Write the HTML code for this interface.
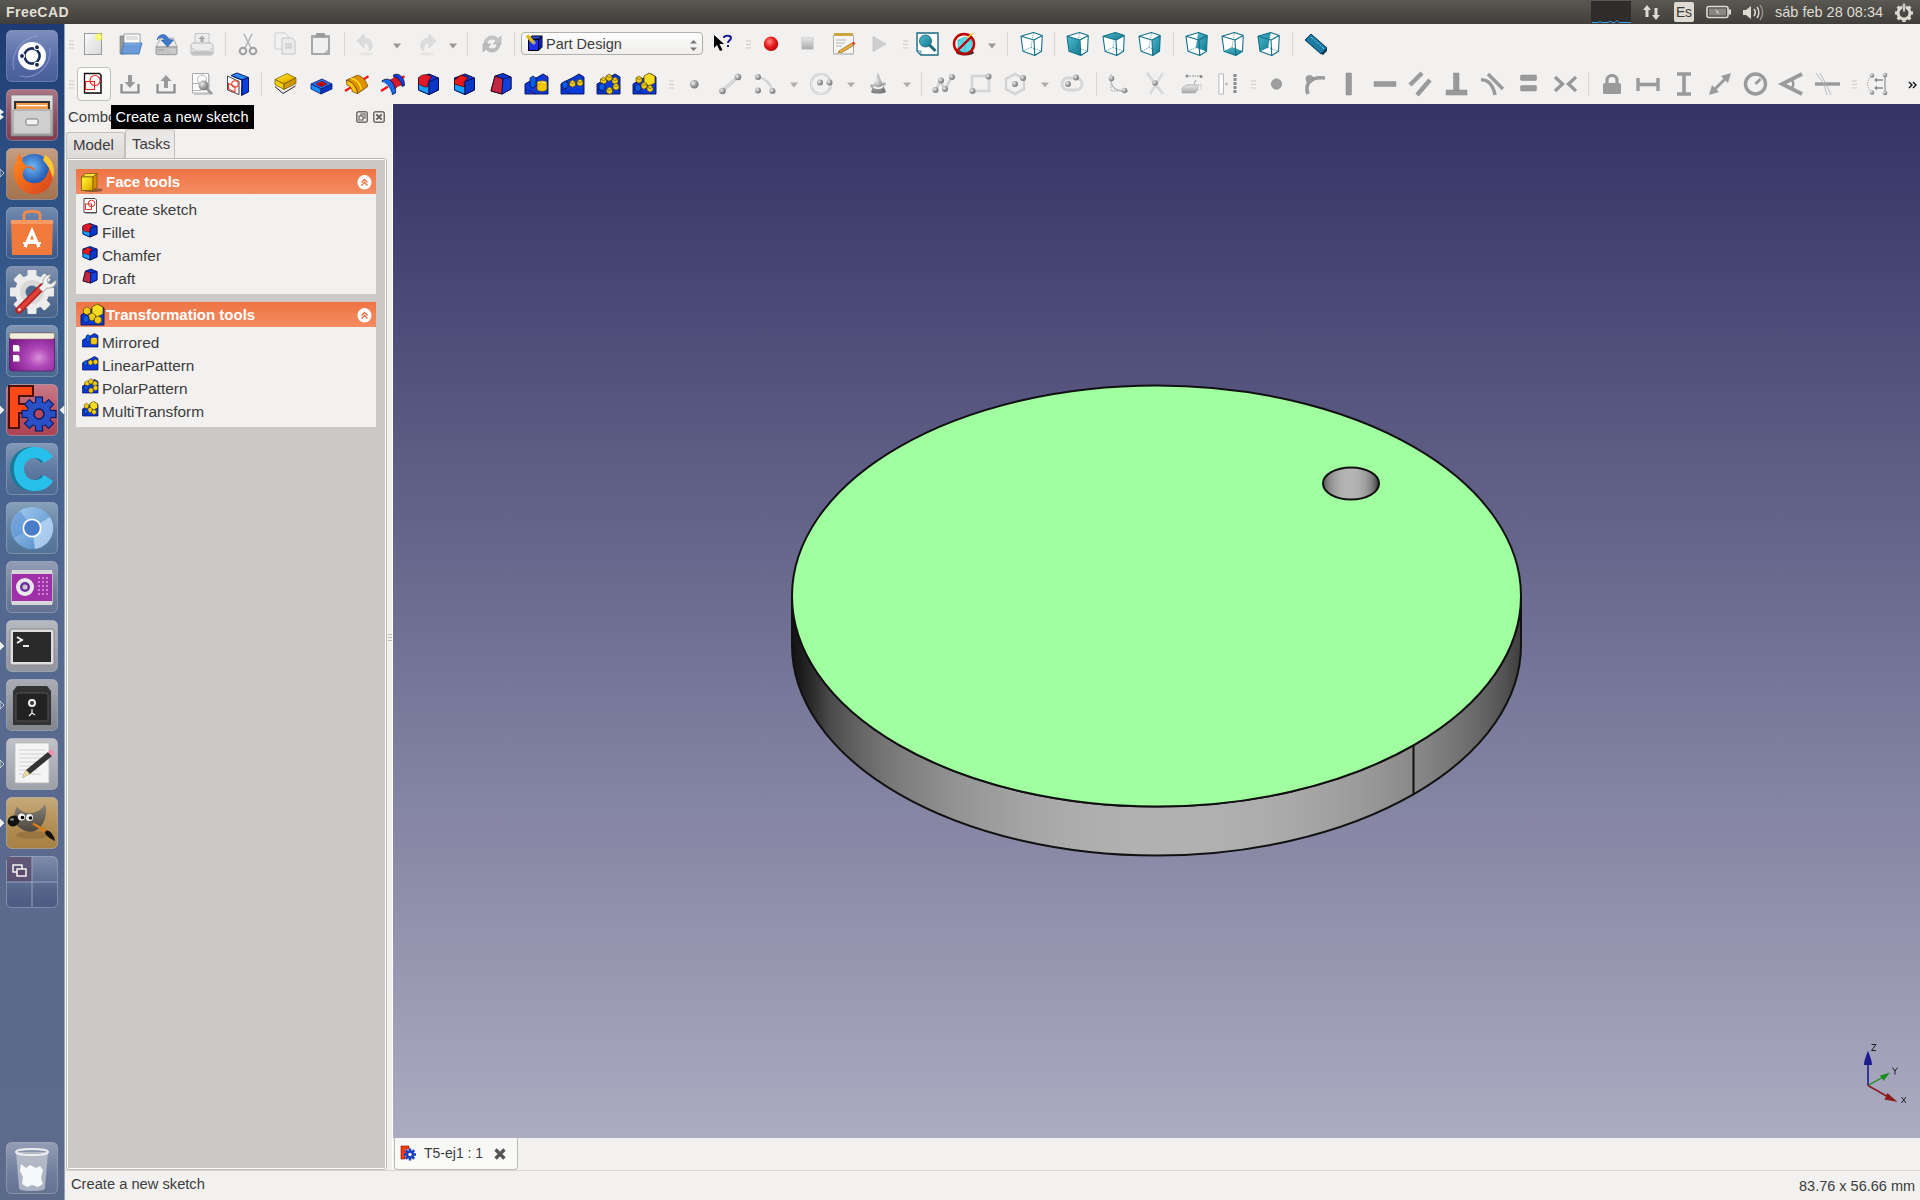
<!DOCTYPE html>
<html><head><meta charset="utf-8">
<style>
*{margin:0;padding:0;box-sizing:border-box}
html,body{width:1920px;height:1200px;overflow:hidden;background:#f2f1f0;font-family:"Liberation Sans",sans-serif;position:relative}
.a{position:absolute}
svg{position:absolute;overflow:visible}
#panel{left:0;top:0;width:1920px;height:24px;background:linear-gradient(#5a5852,#3f3e3a)}
#title{left:6px;top:4px;color:#e3dfd6;font-weight:bold;font-size:14px;line-height:16px;letter-spacing:0.45px}
#launcher{left:0;top:24px;width:65px;height:1176px;background:linear-gradient(#1d3b72 0px,#2a4c80 120px,#3a5d8c 300px,#47638f 450px,#55698f 600px,#5a6a8e 800px,#5d6b8b 1176px)}
#launcher .edge{right:0;top:0;width:1px;height:1176px;background:#9aa3b8}
.tile{left:6px;width:52px;height:52px;border-radius:5px;background:linear-gradient(rgba(255,255,255,.22),rgba(255,255,255,.08));box-shadow:inset 0 0 0 1px rgba(255,255,255,.18)}
#tb{left:65px;top:24px;width:1855px;height:80px;background:#f2f1f0}
#view{left:393px;top:104px;width:1527px;height:1034px;background:linear-gradient(#333365,#ababc1)}
#vline{left:392px;top:104px;width:1px;height:1066px;background:#fff}
#combo{left:65px;top:104px;width:327px;height:1066px;background:#f2f1f0}
#status{left:65px;top:1170px;width:1855px;height:30px;background:#f2f1f0;border-top:1px solid #dad8d3}
.t{position:absolute;color:#3c3c3c;font-size:15px;line-height:17px;white-space:nowrap}
.hd{position:absolute;left:76px;width:300px;height:25px;background:linear-gradient(#ee7443,#f38c62)}
.hd .t{color:#fff;font-weight:bold;font-size:15px}
.items{position:absolute;left:76px;width:300px;background:#f2f1f0}
.chev{position:absolute;left:282px;top:6px;width:13px;height:13px;border-radius:50%;background:#fff}
</style></head><body>

<div id="panel" class="a"><div id="title" class="a">FreeCAD</div></div>
<div id="launcher" class="a"><div class="a edge"></div></div>
<div id="tb" class="a"></div>
<div id="combo" class="a"></div>
<div id="vline" class="a"></div>
<div id="view" class="a"></div>

<svg style="left:0;top:0" width="1920" height="1200" viewBox="0 0 1920 1200">
<defs>
<linearGradient id="sideg" x1="792.0" x2="1521.0" y1="0" y2="0" gradientUnits="userSpaceOnUse"><stop offset="0.000" stop-color="rgb(18,18,18)"/><stop offset="0.025" stop-color="rgb(40,40,40)"/><stop offset="0.050" stop-color="rgb(72,72,72)"/><stop offset="0.075" stop-color="rgb(90,90,90)"/><stop offset="0.100" stop-color="rgb(104,104,104)"/><stop offset="0.125" stop-color="rgb(116,116,116)"/><stop offset="0.150" stop-color="rgb(125,125,125)"/><stop offset="0.175" stop-color="rgb(133,133,133)"/><stop offset="0.200" stop-color="rgb(140,140,140)"/><stop offset="0.225" stop-color="rgb(147,147,147)"/><stop offset="0.250" stop-color="rgb(152,152,152)"/><stop offset="0.275" stop-color="rgb(157,157,157)"/><stop offset="0.300" stop-color="rgb(161,161,161)"/><stop offset="0.325" stop-color="rgb(165,165,165)"/><stop offset="0.350" stop-color="rgb(168,168,168)"/><stop offset="0.375" stop-color="rgb(171,171,171)"/><stop offset="0.400" stop-color="rgb(173,173,173)"/><stop offset="0.425" stop-color="rgb(175,175,175)"/><stop offset="0.450" stop-color="rgb(176,176,176)"/><stop offset="0.475" stop-color="rgb(177,177,177)"/><stop offset="0.500" stop-color="rgb(177,177,177)"/><stop offset="0.525" stop-color="rgb(177,177,177)"/><stop offset="0.550" stop-color="rgb(177,177,177)"/><stop offset="0.575" stop-color="rgb(177,177,177)"/><stop offset="0.600" stop-color="rgb(175,175,175)"/><stop offset="0.625" stop-color="rgb(174,174,174)"/><stop offset="0.650" stop-color="rgb(172,172,172)"/><stop offset="0.675" stop-color="rgb(170,170,170)"/><stop offset="0.700" stop-color="rgb(167,167,167)"/><stop offset="0.725" stop-color="rgb(163,163,163)"/><stop offset="0.750" stop-color="rgb(160,160,160)"/><stop offset="0.775" stop-color="rgb(155,155,155)"/><stop offset="0.800" stop-color="rgb(150,150,150)"/><stop offset="0.825" stop-color="rgb(144,144,144)"/><stop offset="0.850" stop-color="rgb(138,138,138)"/><stop offset="0.875" stop-color="rgb(130,130,130)"/><stop offset="0.900" stop-color="rgb(121,121,121)"/><stop offset="0.925" stop-color="rgb(111,111,111)"/><stop offset="0.950" stop-color="rgb(99,99,99)"/><stop offset="0.975" stop-color="rgb(84,84,84)"/><stop offset="1.000" stop-color="rgb(62,62,62)"/></linearGradient>
<linearGradient id="holeg" x1="1323" x2="1379" y1="0" y2="0" gradientUnits="userSpaceOnUse"><stop offset="0.000" stop-color="rgb(84,84,84)"/><stop offset="0.050" stop-color="rgb(114,114,114)"/><stop offset="0.100" stop-color="rgb(133,133,133)"/><stop offset="0.150" stop-color="rgb(147,147,147)"/><stop offset="0.200" stop-color="rgb(158,158,158)"/><stop offset="0.250" stop-color="rgb(166,166,166)"/><stop offset="0.300" stop-color="rgb(173,173,173)"/><stop offset="0.350" stop-color="rgb(177,177,177)"/><stop offset="0.400" stop-color="rgb(180,180,180)"/><stop offset="0.450" stop-color="rgb(181,181,181)"/><stop offset="0.500" stop-color="rgb(181,181,181)"/><stop offset="0.550" stop-color="rgb(180,180,180)"/><stop offset="0.600" stop-color="rgb(177,177,177)"/><stop offset="0.650" stop-color="rgb(173,173,173)"/><stop offset="0.700" stop-color="rgb(166,166,166)"/><stop offset="0.750" stop-color="rgb(158,158,158)"/><stop offset="0.800" stop-color="rgb(147,147,147)"/><stop offset="0.850" stop-color="rgb(133,133,133)"/><stop offset="0.900" stop-color="rgb(114,114,114)"/><stop offset="0.950" stop-color="rgb(84,84,84)"/><stop offset="1.000" stop-color="rgb(40,40,40)"/></linearGradient>
</defs>
<path d="M792.0,596 L792.0,645 A364.5,210.5 0 0 0 1521.0,645 L1521.0,596 A364.5,210.5 0 0 1 792.0,596 Z" fill="url(#sideg)" stroke="#111" stroke-width="2"/>
<ellipse cx="1156.5" cy="596" rx="364.5" ry="210.5" fill="#a0ff9e" stroke="#111" stroke-width="2"/>
<line x1="1413.5" y1="745.3" x2="1413.5" y2="794.3" stroke="#111" stroke-width="2"/>
<ellipse cx="1351" cy="483.5" rx="28" ry="16" fill="url(#holeg)" stroke="#111" stroke-width="2"/>
</svg>

<svg style="left:1850px;top:1035px" width="70" height="75" viewBox="1850 1035 70 75">
<line x1="1868" y1="1085.5" x2="1868" y2="1058" stroke="#1c1c8c" stroke-width="1.6"/>
<path d="M1868 1050.5 C1869 1054 1872 1060 1872 1065 L1864 1065 C1864 1060 1867 1054 1868 1050.5 Z" fill="#1c1c8c"/>
<line x1="1868" y1="1085.5" x2="1884" y2="1076.5" stroke="#1f8c1f" stroke-width="1.4"/>
<path d="M1890 1072.5 L1880 1075.5 L1883.5 1081 Z" fill="#1f8c1f"/>
<line x1="1868" y1="1085.5" x2="1890" y2="1098" stroke="#8c1c1c" stroke-width="1.5"/>
<path d="M1897.5 1102 L1887.5 1093 L1884.5 1099.5 Z" fill="#8c1c1c"/>
<path d="M1871.5 1044.5h4.5l-4.5 6h4.5" fill="none" stroke="#111" stroke-width="0.9"/>
<path d="M1892.5 1067.5l2.5 3.5l2.5-3.5M1895 1071v3.5" fill="none" stroke="#111" stroke-width="0.9"/>
<path d="M1901.5 1097l4.5 6M1906 1097l-4.5 6" fill="none" stroke="#111" stroke-width="0.9"/>
</svg>
<div id="status" class="a"></div>

<!-- combo view -->
<div class="t" style="left:68px;top:108px">Combo View</div>
<svg style="left:356px;top:111px" width="12" height="12" viewBox="0 0 12 12"><rect x="0.75" y="0.75" width="10.5" height="10.5" rx="2" fill="none" stroke="#6e6d6a" stroke-width="1.5"/><rect x="5" y="3" width="4" height="4" fill="none" stroke="#6e6d6a" stroke-width="1.2"/><rect x="3" y="5" width="4" height="4" fill="#f2f1f0" stroke="#6e6d6a" stroke-width="1.2"/></svg>
<svg style="left:373px;top:111px" width="12" height="12" viewBox="0 0 12 12"><rect x="0.75" y="0.75" width="10.5" height="10.5" rx="2" fill="none" stroke="#6e6d6a" stroke-width="1.5"/><path d="M3.3 3.3L8.7 8.7M8.7 3.3L3.3 8.7" stroke="#5e5d5a" stroke-width="1.9"/></svg>
<!-- tabs -->
<div class="a" style="left:66px;top:132px;width:59px;height:27px;border:1px solid #c4c1bb;border-bottom:none;border-radius:3px 3px 0 0;background:linear-gradient(#e9e8e6,#dcdad7)"></div>
<div class="a" style="left:125px;top:129px;width:50px;height:30px;border:1px solid #c4c1bb;border-bottom:none;border-radius:3px 3px 0 0;background:linear-gradient(#e6e5e3,#f0efed)"></div>
<div class="t" style="left:73px;top:136px">Model</div>
<div class="t" style="left:132px;top:135px">Tasks</div>
<!-- panel box -->
<div class="a" style="left:66px;top:158px;width:321px;height:1012px;border:1px solid #bdbab4;border-radius:3px;background:#fdfdfc"></div>
<div class="a" style="left:68px;top:160px;width:317px;height:1008px;background:#cbc9c6"></div>
<div class="hd" style="top:169px"><div class="t" style="left:30px;top:4px">Face tools</div><div class="chev"></div></div>
<div class="items" style="top:194px;height:100px">
<div class="t" style="left:26px;top:7px;font-size:15.4px">Create sketch</div>
<div class="t" style="left:26px;top:30px;font-size:15.4px">Fillet</div>
<div class="t" style="left:26px;top:53px;font-size:15.4px">Chamfer</div>
<div class="t" style="left:26px;top:76px;font-size:15.4px">Draft</div>
</div>
<div class="hd" style="top:302px"><div class="t" style="left:30px;top:4px">Transformation tools</div><div class="chev"></div></div>
<div class="items" style="top:327px;height:100px">
<div class="t" style="left:26px;top:7px;font-size:15.4px">Mirrored</div>
<div class="t" style="left:26px;top:30px;font-size:15.4px">LinearPattern</div>
<div class="t" style="left:26px;top:53px;font-size:15.4px">PolarPattern</div>
<div class="t" style="left:26px;top:76px;font-size:15.4px">MultiTransform</div>
</div>
<!-- tab bar -->
<div class="a" style="left:394px;top:1138px;width:124px;height:32px;border:1px solid #bdbab4;border-top:none;border-radius:0 0 4px 4px;background:linear-gradient(#f6f6f5,#fbfbfa)"></div>
<div class="t" style="left:424px;top:1145px;font-size:14px">T5-ej1 : 1</div>
<div class="t" style="left:71px;top:1176px;font-size:14.7px">Create a new sketch</div>
<div class="t" style="left:1799px;top:1178px;font-size:14.5px">83.76 x 56.66 mm</div>
<!-- tooltip -->
<div class="a" style="left:111px;top:105px;width:143px;height:24px;background:#000"></div>
<div class="t" style="left:115.5px;top:109px;color:#fff;font-size:14.6px">Create a new sketch</div>
<!--BODY-->

<svg width="0" height="0" style="left:0;top:0"><defs>
<linearGradient id="gpaper" x1="0" y1="0" x2="1" y2="1"><stop offset="0" stop-color="#fafafa"/><stop offset="1" stop-color="#d8d8d8"/></linearGradient>
<linearGradient id="gsilver" x1="0" y1="0" x2="0" y2="1"><stop offset="0" stop-color="#e8e8e8"/><stop offset="1" stop-color="#a8a8a8"/></linearGradient>
<radialGradient id="gred" cx="0.4" cy="0.35" r="0.7"><stop offset="0" stop-color="#ff8a8a"/><stop offset="0.5" stop-color="#e82020"/><stop offset="1" stop-color="#b00000"/></radialGradient>
<radialGradient id="gspark" cx="0.5" cy="0.5" r="0.5"><stop offset="0" stop-color="#fffff0"/><stop offset="0.35" stop-color="#ffff50"/><stop offset="1" stop-color="#ffff00" stop-opacity="0"/></radialGradient>
<radialGradient id="gball" cx="0.35" cy="0.35" r="0.7"><stop offset="0" stop-color="#eee"/><stop offset="0.6" stop-color="#999"/><stop offset="1" stop-color="#777"/></radialGradient>
<linearGradient id="gteal" x1="0" y1="0" x2="1" y2="1"><stop offset="0" stop-color="#4fb8cc"/><stop offset="1" stop-color="#137d94"/></linearGradient>
<linearGradient id="gyel" x1="0" y1="0" x2="1" y2="1"><stop offset="0" stop-color="#fff25a"/><stop offset="0.5" stop-color="#f2c400"/><stop offset="1" stop-color="#c88a00"/></linearGradient>
<linearGradient id="gblue" x1="0" y1="0" x2="1" y2="1"><stop offset="0" stop-color="#3a9cff"/><stop offset="1" stop-color="#0a2fb8"/></linearGradient>
</defs></svg>
<svg style="left:69px;top:40px" width="5" height="9" viewBox="0 0 5 9"><path d="M0 1h5M0 4.5h5M0 8h5" stroke="#c9c7c2" stroke-width="0.9"/></svg>
<svg style="left:746px;top:40px" width="5" height="9" viewBox="0 0 5 9"><path d="M0 1h5M0 4.5h5M0 8h5" stroke="#c9c7c2" stroke-width="0.9"/></svg>
<svg style="left:903px;top:40px" width="5" height="9" viewBox="0 0 5 9"><path d="M0 1h5M0 4.5h5M0 8h5" stroke="#c9c7c2" stroke-width="0.9"/></svg>
<div class="a" style="left:225px;top:32px;width:1px;height:24px;background:#d8d6d2"></div>
<div class="a" style="left:344px;top:32px;width:1px;height:24px;background:#d8d6d2"></div>
<div class="a" style="left:467px;top:32px;width:1px;height:24px;background:#d8d6d2"></div>
<div class="a" style="left:514px;top:32px;width:1px;height:24px;background:#d8d6d2"></div>
<div class="a" style="left:1007px;top:32px;width:1px;height:24px;background:#d8d6d2"></div>
<div class="a" style="left:1054px;top:32px;width:1px;height:24px;background:#d8d6d2"></div>
<div class="a" style="left:1173px;top:32px;width:1px;height:24px;background:#d8d6d2"></div>
<div class="a" style="left:1292px;top:32px;width:1px;height:24px;background:#d8d6d2"></div>
<svg style="left:392.5px;top:42.5px" width="8" height="6" viewBox="0 0 8 6"><path d="M0 0.5h8L4 5.5z" fill="#9a9995"/></svg>
<svg style="left:448.5px;top:42.5px" width="8" height="6" viewBox="0 0 8 6"><path d="M0 0.5h8L4 5.5z" fill="#9a9995"/></svg>
<svg style="left:988px;top:42.5px" width="8" height="6" viewBox="0 0 8 6"><path d="M0 0.5h8L4 5.5z" fill="#9a9995"/></svg>
<svg style="left:82.0px;top:32.0px" width="24" height="24" viewBox="0 0 24 24"><rect x="2.5" y="1.5" width="17" height="21" fill="url(#gpaper)" stroke="#9a9a9a"/><circle cx="17" cy="5" r="4.5" fill="url(#gspark)"/></svg>
<svg style="left:117.5px;top:32.0px" width="24" height="24" viewBox="0 0 24 24"><path d="M2 4h4l1 1v17H2z" fill="#9a9a9a" stroke="#777" stroke-width="0.6"/><path d="M6 2h16v10H6z" fill="#fafafa" stroke="#8c8c8c" stroke-width="0.8"/><path d="M8 5h12M8 7h12" stroke="#c8c8c8" stroke-width="1"/><path d="M6 11h18l-3 11H3z" fill="#6a9ad8" stroke="#3e6fb0" stroke-width="0.8"/><path d="M6.5 12h16" stroke="#a0c4f0" stroke-width="0.8"/></svg>
<svg style="left:153.5px;top:32.0px" width="24" height="24" viewBox="0 0 24 24"><path d="M6.5 6h13l3.5 9H2z" fill="#ececec" stroke="#9a9a9a" stroke-width="0.8"/><path d="M2 15h21v6.5c0 0.8-0.7 1.2-1.2 1.2H3.2c-0.6 0-1.2-0.4-1.2-1.2z" fill="#c4c4c4" stroke="#8a8a8a" stroke-width="0.8"/><path d="M4 18h6" stroke="#999" stroke-width="1"/><path d="M17 17v4M19 17v4M21 17v4" stroke="#d8d8d8" stroke-width="0.8"/><path d="M3 8C4 2 12 0 14.5 7L19.5 8L13.5 15L7 8H10.5C9 4.5 6 4.5 3 8Z" fill="#3f78c8" stroke="#2a5aa0" stroke-width="0.5"/></svg>
<svg style="left:189.5px;top:32.0px" width="24" height="24" viewBox="0 0 24 24"><rect x="5" y="1.5" width="14" height="10" fill="#ececec" stroke="#bbb" stroke-width="0.8"/><path d="M12 3.5l3.5 3.5h-2v3h-3v-3h-2z" fill="#a8a8a8"/><path d="M1 14c0-2 1-3 3-3h16c2 0 3 1 3 3v7c0 1-1 2-2 2H3c-1 0-2-1-2-2z" fill="#ececec" stroke="#a8a8a8" stroke-width="0.8"/><path d="M3 16c0 3 1 3 3 3h12c2 0 3 0 3-3" fill="none" stroke="#b4b4b4" stroke-width="0.8"/><rect x="1.5" y="19.5" width="21" height="3" rx="1.2" fill="#c0c0c0"/></svg>
<svg style="left:236.0px;top:32.0px" width="24" height="24" viewBox="0 0 24 24"><path d="M8 2l7 14M16 2l-7 14" stroke="#b4b4b4" stroke-width="1.6"/><circle cx="7" cy="19" r="3.3" fill="none" stroke="#9e9e9e" stroke-width="2"/><circle cx="17" cy="19" r="3.3" fill="none" stroke="#9e9e9e" stroke-width="2"/></svg>
<svg style="left:273.0px;top:32.0px" width="24" height="24" viewBox="0 0 24 24"><path d="M2 1h10l3 3v13H2z" fill="#f2f2f2" stroke="#c4c4c4" stroke-width="0.8"/><path d="M9 6h10l3 3v13H9z" fill="#ececec" stroke="#bcbcbc" stroke-width="0.8"/><rect x="12" y="11" width="7" height="6" fill="#d6d6d6"/></svg>
<svg style="left:309.0px;top:32.0px" width="24" height="24" viewBox="0 0 24 24"><rect x="2" y="3" width="19" height="20" rx="1" fill="#a8a8a8"/><rect x="4" y="6" width="15" height="15" fill="#f0f0f0"/><rect x="7" y="1" width="9" height="4" rx="1" fill="#9a9a9a"/><path d="M15 21l4-4v4z" fill="#bbb"/></svg>
<svg style="left:355.5px;top:32.0px" width="24" height="24" viewBox="0 0 24 24"><path d="M1 9l7-7v4c6 0 9 4 8 10l-3 3c1-5-1-8-5-8v5z" fill="#dcdcdc" stroke="#cfcfcf" stroke-width="0.6"/><ellipse cx="10" cy="22" rx="7" ry="1.5" fill="#e4e3e1"/></svg>
<svg style="left:412.5px;top:32.0px" width="24" height="24" viewBox="0 0 24 24"><path d="M23 9l-7-7v4c-6 0-9 4-8 10l3 3c-1-5 1-8 5-8v5z" fill="#dcdcdc" stroke="#cfcfcf" stroke-width="0.6"/><ellipse cx="14" cy="22" rx="7" ry="1.5" fill="#e4e3e1"/></svg>
<svg style="left:479.5px;top:32.0px" width="24" height="24" viewBox="0 0 24 24"><path d="M4 12c0-5 4-8 8-8c3 0 5 1 6 3l3-3v8h-8l3-3c-1-1-2-2-4-2c-3 0-5 2-5 5z" fill="#c4c4c4" stroke="#b0b0b0" stroke-width="0.6"/><path d="M20 12c0 5-4 8-8 8c-3 0-5-1-6-3l-3 3v-8h8l-3 3c1 1 2 2 4 2c3 0 5-2 5-5z" fill="#bdbdbd" stroke="#a8a8a8" stroke-width="0.6"/></svg>
<div class="a" style="left:521px;top:32px;width:182px;height:23px;border:1px solid #b3b0aa;border-radius:4px;background:linear-gradient(#fdfdfd,#efeeec)"></div>
<svg style="left:526px;top:34px" width="18" height="19" viewBox="0 0 18 19"><path d="M2 5L6 1.5H16.5V13L12.5 17H2Z" fill="#000"/><path d="M3 6H12V16H3Z" fill="#1a30e8"/><path d="M13 5.5L16 3V12.5L13 15.5Z" fill="#0a1ca8"/><path d="M4 4.5L6.5 2.5H15L12.5 4.5Z" fill="#2a50f0"/><path d="M1 1.5L8 9" stroke="#e0b818" stroke-width="3.4"/><path d="M7 8L9 10" stroke="#9a9a9a" stroke-width="3"/></svg>
<div class="t" style="left:546px;top:36px;font-size:14.5px">Part Design</div>
<svg style="left:689px;top:39px" width="9" height="13" viewBox="0 0 9 13"><path d="M1 4.5h7L4.5 1z" fill="#777"/><path d="M1 8.5h7L4.5 12z" fill="#777"/></svg>
<svg style="left:713px;top:34px" width="20" height="20" viewBox="0 0 20 20"><path d="M1 1v13l3-3l3 6l2.5-1l-3-6h4.5z" fill="#000"/><path d="M11 4c0-3 7-3 7 0c0 2-3 2.5-3 5" fill="none" stroke="#1a1a90" stroke-width="2"/><rect x="14" y="11" width="2" height="2" fill="#1a1a90"/></svg>
<svg style="left:763px;top:36px" width="16" height="16" viewBox="0 0 16 16"><circle cx="8" cy="7.8" r="7.2" fill="url(#gred)"/></svg>
<svg style="left:801px;top:37px" width="13" height="13" viewBox="0 0 13 13"><rect x="0.8" y="0.8" width="11.4" height="11.4" fill="url(#gsilver)" stroke="#c8c8c8" stroke-width="0.8"/></svg>
<svg style="left:831.5px;top:32.0px" width="24" height="24" viewBox="0 0 24 24"><rect x="1.5" y="3" width="20" height="19" rx="1" fill="#f4f4f2" stroke="#9a9a96" stroke-width="0.8"/><rect x="2" y="1" width="19" height="3" fill="#c9a640"/><path d="M4 8h10M4 11h9M4 14h6" stroke="#b8b8b8" stroke-width="1"/><path d="M7 19l13-8l2 2l-13 8l-3 0z" fill="#f0b040" stroke="#8a5a10" stroke-width="0.7"/><path d="M20 11l2 2l1.5-1.5l-2-2z" fill="#e03030"/><rect x="1.5" y="21" width="20" height="2" fill="#c8c8c6"/></svg>
<svg style="left:872px;top:36px" width="15" height="16" viewBox="0 0 15 16"><path d="M1 0.5v15l13-7.5z" fill="#cfcfcf" stroke="#bdbdbd" stroke-width="0.6"/></svg>
<svg style="left:916px;top:32px" width="23" height="24" viewBox="0 0 23 24"><path d="M1 1h21v22H5l-4-4z" fill="#fff" stroke="#1a6a80" stroke-width="1.4"/><circle cx="9.5" cy="9" r="6" fill="url(#gteal)" stroke="#1a5a6a" stroke-width="0.8"/><path d="M13.5 13l6 6" stroke="#1a6a7a" stroke-width="3"/><path d="M2 19l3 0l0 3" fill="#fff" stroke="#1a6a80" stroke-width="0.8"/></svg>
<svg style="left:952px;top:32px" width="24" height="24" viewBox="0 0 24 24"><ellipse cx="13" cy="20.5" rx="9" ry="3" fill="#333"/><path d="M6 8l7-3l7 3v10l-7 3l-7-3z" fill="#5fd8e8" stroke="#3aaab8" stroke-width="0.6"/><path d="M13 11v10M6 8l7 3l7-3" stroke="#3aaab8" stroke-width="0.6" fill="none"/><circle cx="12" cy="12" r="10" fill="none" stroke="#c00000" stroke-width="2.4"/><path d="M5 19L19 5" stroke="#c00000" stroke-width="2.4"/><path d="M15 6l6-5" stroke="#f0d020" stroke-width="1.5"/></svg>
<svg style="left:1019.5px;top:32px" width="24" height="24" viewBox="0 0 24 24"><path d="M1 4.25L13.5 0.5L22.25 3.5L21.5 19.25L14.75 23.5L3 19.25Z" fill="#fff"/><path d="M13.5 0.5L11 15.5L3 19.25M11 15.5L21.5 19.25" fill="none" stroke="#1a7a90" stroke-width="0.7" stroke-dasharray="1.2 1"/><path d="M1 4.25L13.5 0.5L22.25 3.5L21.5 19.25L14.75 23.5L3 19.25ZM1 4.25L14 8L22.25 3.5M14 8L14.75 23.5" fill="none" stroke="#137088" stroke-width="1.1" stroke-linejoin="round"/></svg>
<svg style="left:1066.0px;top:32px" width="24" height="24" viewBox="0 0 24 24"><path d="M1 4.25L13.5 0.5L22.25 3.5L21.5 19.25L14.75 23.5L3 19.25Z" fill="#fff"/><path d="M1 4.25L14 8L14.75 23.5L3 19.25Z" fill="url(#gteal)"/><path d="M13.5 0.5L11 15.5L3 19.25M11 15.5L21.5 19.25" fill="none" stroke="#1a7a90" stroke-width="0.7" stroke-dasharray="1.2 1"/><path d="M1 4.25L13.5 0.5L22.25 3.5L21.5 19.25L14.75 23.5L3 19.25ZM1 4.25L14 8L22.25 3.5M14 8L14.75 23.5" fill="none" stroke="#137088" stroke-width="1.1" stroke-linejoin="round"/></svg>
<svg style="left:1102.0px;top:32px" width="24" height="24" viewBox="0 0 24 24"><path d="M1 4.25L13.5 0.5L22.25 3.5L21.5 19.25L14.75 23.5L3 19.25Z" fill="#fff"/><path d="M1 4.25L13.5 0.5L22.25 3.5L14 8Z" fill="url(#gteal)"/><path d="M13.5 0.5L11 15.5L3 19.25M11 15.5L21.5 19.25" fill="none" stroke="#1a7a90" stroke-width="0.7" stroke-dasharray="1.2 1"/><path d="M1 4.25L13.5 0.5L22.25 3.5L21.5 19.25L14.75 23.5L3 19.25ZM1 4.25L14 8L22.25 3.5M14 8L14.75 23.5" fill="none" stroke="#137088" stroke-width="1.1" stroke-linejoin="round"/></svg>
<svg style="left:1138.0px;top:32px" width="24" height="24" viewBox="0 0 24 24"><path d="M1 4.25L13.5 0.5L22.25 3.5L21.5 19.25L14.75 23.5L3 19.25Z" fill="#fff"/><path d="M14 8L22.25 3.5L21.5 19.25L14.75 23.5Z" fill="url(#gteal)"/><path d="M13.5 0.5L11 15.5L3 19.25M11 15.5L21.5 19.25" fill="none" stroke="#1a7a90" stroke-width="0.7" stroke-dasharray="1.2 1"/><path d="M1 4.25L13.5 0.5L22.25 3.5L21.5 19.25L14.75 23.5L3 19.25ZM1 4.25L14 8L22.25 3.5M14 8L14.75 23.5" fill="none" stroke="#137088" stroke-width="1.1" stroke-linejoin="round"/></svg>
<svg style="left:1185.0px;top:32px" width="24" height="24" viewBox="0 0 24 24"><path d="M1 4.25L13.5 0.5L22.25 3.5L21.5 19.25L14.75 23.5L3 19.25Z" fill="#fff"/><path d="M13.5 0.5L22.25 3.5L21.5 19.25L11 15.5Z" fill="url(#gteal)"/><path d="M13.5 0.5L11 15.5L3 19.25M11 15.5L21.5 19.25" fill="none" stroke="#1a7a90" stroke-width="0.7" stroke-dasharray="1.2 1"/><path d="M1 4.25L13.5 0.5L22.25 3.5L21.5 19.25L14.75 23.5L3 19.25ZM1 4.25L14 8L22.25 3.5M14 8L14.75 23.5" fill="none" stroke="#137088" stroke-width="1.1" stroke-linejoin="round"/></svg>
<svg style="left:1221.0px;top:32px" width="24" height="24" viewBox="0 0 24 24"><path d="M1 4.25L13.5 0.5L22.25 3.5L21.5 19.25L14.75 23.5L3 19.25Z" fill="#fff"/><path d="M3 19.25L14.75 23.5L21.5 19.25L11 15.5Z" fill="url(#gteal)"/><path d="M13.5 0.5L11 15.5L3 19.25M11 15.5L21.5 19.25" fill="none" stroke="#1a7a90" stroke-width="0.7" stroke-dasharray="1.2 1"/><path d="M1 4.25L13.5 0.5L22.25 3.5L21.5 19.25L14.75 23.5L3 19.25ZM1 4.25L14 8L22.25 3.5M14 8L14.75 23.5" fill="none" stroke="#137088" stroke-width="1.1" stroke-linejoin="round"/></svg>
<svg style="left:1257.0px;top:32px" width="24" height="24" viewBox="0 0 24 24"><path d="M1 4.25L13.5 0.5L22.25 3.5L21.5 19.25L14.75 23.5L3 19.25Z" fill="#fff"/><path d="M1 4.25L13.5 0.5L11 15.5L3 19.25Z" fill="url(#gteal)"/><path d="M13.5 0.5L11 15.5L3 19.25M11 15.5L21.5 19.25" fill="none" stroke="#1a7a90" stroke-width="0.7" stroke-dasharray="1.2 1"/><path d="M1 4.25L13.5 0.5L22.25 3.5L21.5 19.25L14.75 23.5L3 19.25ZM1 4.25L14 8L22.25 3.5M14 8L14.75 23.5" fill="none" stroke="#137088" stroke-width="1.1" stroke-linejoin="round"/></svg>
<svg style="left:1304px;top:32px" width="24" height="24" viewBox="0 0 24 24"><path d="M1 8l6-6l16 14l-6 6z" fill="#1b7aa3" stroke="#0a3a55" stroke-width="1"/><path d="M7 5l2 2M10 7.5l1.5 1.5M12.5 10l2 2M15.5 12.5l1.5 1.5M18 15l2 2" stroke="#9fe0f0" stroke-width="0.8"/><path d="M17 22l6-6v3l-4 4z" fill="#0a3a55"/></svg>
<svg style="left:69px;top:80px" width="5" height="9" viewBox="0 0 5 9"><path d="M0 1h5M0 4.5h5M0 8h5" stroke="#c9c7c2" stroke-width="0.9"/></svg>
<svg style="left:669px;top:80px" width="5" height="9" viewBox="0 0 5 9"><path d="M0 1h5M0 4.5h5M0 8h5" stroke="#c9c7c2" stroke-width="0.9"/></svg>
<svg style="left:1251px;top:80px" width="5" height="9" viewBox="0 0 5 9"><path d="M0 1h5M0 4.5h5M0 8h5" stroke="#c9c7c2" stroke-width="0.9"/></svg>
<svg style="left:1852px;top:80px" width="5" height="9" viewBox="0 0 5 9"><path d="M0 1h5M0 4.5h5M0 8h5" stroke="#c9c7c2" stroke-width="0.9"/></svg>
<div class="a" style="left:261px;top:72px;width:1px;height:24px;background:#d8d6d2"></div>
<div class="a" style="left:921px;top:72px;width:1px;height:24px;background:#d8d6d2"></div>
<div class="a" style="left:1096px;top:72px;width:1px;height:24px;background:#d8d6d2"></div>
<div class="a" style="left:1588px;top:72px;width:1px;height:24px;background:#d8d6d2"></div>
<svg style="left:790px;top:82px" width="8" height="6" viewBox="0 0 8 6"><path d="M0 0.5h8L4 5.5z" fill="#b0afac"/></svg>
<svg style="left:847px;top:82px" width="8" height="6" viewBox="0 0 8 6"><path d="M0 0.5h8L4 5.5z" fill="#b0afac"/></svg>
<svg style="left:902.5px;top:82px" width="8" height="6" viewBox="0 0 8 6"><path d="M0 0.5h8L4 5.5z" fill="#b0afac"/></svg>
<svg style="left:1041px;top:82px" width="8" height="6" viewBox="0 0 8 6"><path d="M0 0.5h8L4 5.5z" fill="#b0afac"/></svg>
<div class="a" style="left:77px;top:67px;width:34px;height:34px;border:1px solid #c3c0ba;border-radius:4px;background:linear-gradient(#ffffff,#f6f6f5)"></div>
<svg style="left:82px;top:72px" width="22" height="24" viewBox="0 0 22 24"><path d="M2.5 1.5h15l1.5 1.5v18h-16.5z" fill="#fff" stroke="#111" stroke-width="1.3"/><path d="M19 3v18.5H4" fill="none" stroke="#333" stroke-width="1.2"/><circle cx="13" cy="8.5" r="5" fill="none" stroke="#f02020" stroke-width="1.1"/><rect x="3.5" y="9.5" width="9" height="8" fill="none" stroke="#f02020" stroke-width="1.1"/></svg>
<svg style="left:120px;top:74px" width="20" height="20" viewBox="0 0 20 20"><path d="M1.5 10v8.5h17V10" fill="none" stroke="#8a8a8a" stroke-width="2.2"/><path d="M8 1h4v7h3.5l-5.5 6l-5.5-6H8z" fill="#9a9a9a"/></svg>
<svg style="left:156px;top:74px" width="20" height="20" viewBox="0 0 20 20"><path d="M1.5 10v8.5h17V10" fill="none" stroke="#8a8a8a" stroke-width="2.2"/><path d="M8 14h4v-7h3.5l-5.5-6l-5.5 6H8z" fill="#9a9a9a"/></svg>
<svg style="left:191px;top:72px" width="23" height="24" viewBox="0 0 23 24"><path d="M1.5 1.5h16v19.5h-16z" fill="#fff" stroke="#aaa" stroke-width="1"/><path d="M18 3v19H3" fill="none" stroke="#bdbdbd" stroke-width="1.4"/><circle cx="11" cy="7.5" r="4.5" fill="none" stroke="#aaa" stroke-width="0.9"/><path d="M2 11.5h8v7H2" fill="none" stroke="#aaa" stroke-width="0.9"/><path d="M14 15l7 7" stroke="#999" stroke-width="2.6"/><circle cx="12.5" cy="13.5" r="5" fill="url(#gball)"/></svg>
<svg style="left:227px;top:72px" width="23" height="24" viewBox="0 0 23 24"><path d="M10 1L21.5 5.5L15 8L4 3.5Z" fill="#2a8af8" stroke="#020a50" stroke-width="0.9"/><path d="M15 8L21.5 5.5V20L14.5 23.5Z" fill="#0a40e0" stroke="#020a50" stroke-width="0.9"/><path d="M6 4.5L15 8V23" fill="none" stroke="#020a50" stroke-width="0.8"/><path d="M0.5 4L12 9.5V22.5L0.5 18Z" fill="#fff" stroke="#333" stroke-width="0.9"/><circle cx="8" cy="12" r="3.3" fill="none" stroke="#f03a20" stroke-width="1.1"/><path d="M1.5 11.5L8 14.5V20L1.5 17Z" fill="none" stroke="#f03a20" stroke-width="1.1"/></svg>
<svg style="left:274px;top:72px" width="23" height="23" viewBox="0 0 23 23"><path d="M1 14.5L9 21.5L21.5 14" fill="none" stroke="#222" stroke-width="1"/><path d="M1 7.5L13 1.5L22 6L10 12z" fill="url(#gyel)" stroke="#6a5000" stroke-width="0.7"/><path d="M1 7.5L10 12v5.5L1 12.5z" fill="#f0d000" stroke="#6a5000" stroke-width="0.7"/><path d="M10 12L22 6v5.5L10 17.5z" fill="#d09a00" stroke="#6a5000" stroke-width="0.7"/></svg>
<svg style="left:310px;top:78px" width="23" height="17" viewBox="0 0 23 17"><path d="M1 6L12 1L22 6L11 11z" fill="#2a72f2" stroke="#061a70" stroke-width="0.8"/><path d="M6 6L12 3.2L17 6L11 8.8z" fill="#e01010" stroke="#600" stroke-width="0.5"/><path d="M9 6.5L12 5L14 6.5L11 8z" fill="#a00000"/><path d="M1 6L11 11v5L1 11z" fill="#1a90ff" stroke="#061a70" stroke-width="0.8"/><path d="M11 11L22 6v5L11 16z" fill="#0a36c0" stroke="#061a70" stroke-width="0.8"/></svg>
<svg style="left:340px;top:68px" width="72" height="32" viewBox="0 0 72 32"><path d="M5 23L28.5 8.3" stroke="#ff1010" stroke-width="2.2"/>
<path d="M6.3 12.2L17.3 7.2C21 8 25.5 10.5 27.8 18.5L17.5 25.7C16.5 19 13 14 6.3 12.2Z" fill="#e09000" stroke="#5a3a00" stroke-width="0.7"/>
<path d="M11 10C16 11.5 19.5 14 21.5 21.5" fill="none" stroke="#ffe000" stroke-width="1.6"/>
<path d="M6.3 12.2C13 14 16.5 19 17.5 25.7L12.3 23.5C12 20 10 17.5 7 17Z" fill="#ffc400" stroke="#5a3a00" stroke-width="0.7"/>
<path d="M41 23L64.5 8.3" stroke="#ff1010" stroke-width="2.2"/>
<path d="M50 12C53 11 55 9 55 7.5L63 17.5C60 17 57.5 18 56 20C55 21 54 22 53 22.5Z" fill="#d81828" stroke="#400" stroke-width="0.5"/>
<path d="M53.5 7C57 5 62 7 64 13L64.5 17.5L62.5 18.5C61 12 57 9 53.5 8.5Z" fill="#1040e8" stroke="#02083a" stroke-width="0.8"/>
<path d="M42 12.8C46 10 50 11 52 14C55 18 56 22 55.5 25L52.5 26.5C51 20 47 15 42 13.5Z" fill="#1a6af0" stroke="#02083a" stroke-width="0.8"/>
<path d="M43 13.8C47 16 50 20 51.5 25.5" fill="none" stroke="#9fd8ff" stroke-width="1"/></svg>
<svg style="left:417px;top:72px" width="23" height="24" viewBox="0 0 23 24"><path d="M1.5 6L12 2L21.5 6V18L12 22.5L1.5 18z" fill="#0a38d0" stroke="#040c50" stroke-width="1"/><path d="M1.5 6L12 9.5V22.5L1.5 18z" fill="#17a0ff" stroke="#040c50" stroke-width="0.9"/><path d="M12 9.5L21.5 6V18L12 22.5z" fill="#0838c8" stroke="#040c50" stroke-width="0.9"/><path d="M1.5 6c2-3 6-4 10-3l3 2l-3 4l-1 6c-4 0-8-2-9-4z" fill="#e01828" stroke="#400" stroke-width="0.7"/></svg>
<svg style="left:453px;top:72px" width="23" height="24" viewBox="0 0 23 24"><path d="M1.5 6L12 2L21.5 6V18L12 22.5L1.5 18z" fill="#0a38d0" stroke="#040c50" stroke-width="1"/><path d="M1.5 6L12 9.5V22.5L1.5 18z" fill="#17a0ff" stroke="#040c50" stroke-width="0.9"/><path d="M12 9.5L21.5 6V18L12 22.5z" fill="#0838c8" stroke="#040c50" stroke-width="0.9"/><path d="M1.5 8L8 3L15 5.5L11 10.5L11.5 15L1.5 12z" fill="#e81818" stroke="#400" stroke-width="0.7"/></svg>
<svg style="left:490px;top:72px" width="22" height="24" viewBox="0 0 22 24"><path d="M5 4L13 1.5L21 5V17L12 22L1 19z" fill="#0a38d0" stroke="#040c50" stroke-width="1"/><path d="M5 4L13 7L12 22L1 19z" fill="#c02840" stroke="#300010" stroke-width="0.9"/><path d="M13 7L21 5V17L12 22z" fill="#1040e0" stroke="#040c50" stroke-width="0.9"/></svg>
<svg style="left:524px;top:72px" width="25" height="24" viewBox="0 0 25 24"><path d="M1 12L6 9L13 5.5L19 2L24 5V22H1z" fill="#0a3ad8" stroke="#040c50" stroke-width="0.9"/><path d="M1 17L12 22" stroke="#061a80" stroke-width="0.8"/><path d="M6 6l3-2l3 2v8l-3 2l-3-2z" fill="#0c5ae8" stroke="#030a40" stroke-width="0.7"/><ellipse cx="18" cy="11" rx="5" ry="2.2" fill="#fff060" stroke="#503000" stroke-width="0.6"/><path d="M13 11v6c0 1.5 2.5 2.5 5 2.5s5-1 5-2.5v-6" fill="#f0c800" stroke="#503000" stroke-width="0.6"/><path d="M6 22L24 3" stroke="#e02020" stroke-width="0.8" stroke-dasharray="1.5 1.5"/></svg>
<svg style="left:560px;top:72px" width="25" height="24" viewBox="0 0 25 24"><path d="M1 12L6 9L13 5.5L19 2L24 5V22H1z" fill="#0a3ad8" stroke="#040c50" stroke-width="0.9"/><path d="M1 17L12 22" stroke="#061a80" stroke-width="0.8"/><path d="M2 11l3-2l3 2v4l-3 2l-3-2z" fill="#0c5ae8" stroke="#030a40" stroke-width="0.7"/><path d="M9.5 10l3-2l3 2v3.5l-3 1.8l-3-1.8z" fill="#f0cc10" stroke="#4a3600" stroke-width="0.6"/><path d="M9.5 10l3 1.5l3-1.5" fill="none" stroke="#4a3600" stroke-width="0.5"/><path d="M17 9l3-2l3 2v3.5l-3 1.8l-3-1.8z" fill="#f0cc10" stroke="#4a3600" stroke-width="0.6"/><path d="M17 9l3 1.5l3-1.5" fill="none" stroke="#4a3600" stroke-width="0.5"/></svg>
<svg style="left:596px;top:72px" width="25" height="24" viewBox="0 0 25 24"><path d="M1 12L6 9L13 5.5L19 2L24 5V22H1z" fill="#0a3ad8" stroke="#040c50" stroke-width="0.9"/><path d="M1 17L12 22" stroke="#061a80" stroke-width="0.8"/><path d="M4.5 7l3-2l3 2v3.5l-3 1.8l-3-1.8z" fill="#f0cc10" stroke="#4a3600" stroke-width="0.6"/><path d="M4.5 7l3 1.5l3-1.5" fill="none" stroke="#4a3600" stroke-width="0.5"/><path d="M10 4l3-2l3 2v3.5l-3 1.8l-3-1.8z" fill="#f0cc10" stroke="#4a3600" stroke-width="0.6"/><path d="M10 4l3 1.5l3-1.5" fill="none" stroke="#4a3600" stroke-width="0.5"/><path d="M16 7l3-2l3 2v3.5l-3 1.8l-3-1.8z" fill="#f0cc10" stroke="#4a3600" stroke-width="0.6"/><path d="M16 7l3 1.5l3-1.5" fill="none" stroke="#4a3600" stroke-width="0.5"/><path d="M17 13l3-2l3 2v3.5l-3 1.8l-3-1.8z" fill="#f0cc10" stroke="#4a3600" stroke-width="0.6"/><path d="M17 13l3 1.5l3-1.5" fill="none" stroke="#4a3600" stroke-width="0.5"/><path d="M10.5 17l3-2l3 2v3.5l-3 1.8l-3-1.8z" fill="#f0cc10" stroke="#4a3600" stroke-width="0.6"/><path d="M10.5 17l3 1.5l3-1.5" fill="none" stroke="#4a3600" stroke-width="0.5"/><path d="M3 13l3-2l3 2v4l-3 2l-3-2z" fill="#0c5ae8" stroke="#030a40" stroke-width="0.7"/></svg>
<svg style="left:632px;top:72px" width="25" height="24" viewBox="0 0 25 24"><path d="M1 12L6 9L13 5.5L19 2L24 5V22H1z" fill="#0a3ad8" stroke="#040c50" stroke-width="0.9"/><path d="M1 17L12 22" stroke="#061a80" stroke-width="0.8"/><path d="M4 6l3-2l3 2v3.5l-3 1.8l-3-1.8z" fill="#f0cc10" stroke="#4a3600" stroke-width="0.6"/><path d="M4 6l3 1.5l3-1.5" fill="none" stroke="#4a3600" stroke-width="0.5"/><path d="M12 4l5-3l6 3v7l-6 3l-5-3z" fill="#f8dc20" stroke="#4a3600" stroke-width="0.7"/><path d="M9 12l3-2l3 2v3.5l-3 1.8l-3-1.8z" fill="#f0cc10" stroke="#4a3600" stroke-width="0.6"/><path d="M9 12l3 1.5l3-1.5" fill="none" stroke="#4a3600" stroke-width="0.5"/><path d="M15 15l3-2l3 2v3.5l-3 1.8l-3-1.8z" fill="#f0cc10" stroke="#4a3600" stroke-width="0.6"/><path d="M15 15l3 1.5l3-1.5" fill="none" stroke="#4a3600" stroke-width="0.5"/><path d="M3 14l3-2l3 2v4l-3 2l-3-2z" fill="#0c5ae8" stroke="#030a40" stroke-width="0.7"/></svg>
<svg style="left:689px;top:79px" width="11" height="11" viewBox="0 0 11 11"><circle cx="5.3" cy="5.3" r="4.3" fill="url(#gball)"/></svg>
<svg style="left:718px;top:72px" width="25" height="24" viewBox="0 0 25 24"><path d="M4 19L20 5" stroke="#c8c8c8" stroke-width="3"/><path d="M4 19L20 5" stroke="#f4f4f4" stroke-width="1"/><circle cx="4.5" cy="19" r="3.3" fill="url(#gball)"/><circle cx="20" cy="5" r="3.3" fill="url(#gball)"/></svg>
<svg style="left:754px;top:72px" width="24" height="24" viewBox="0 0 24 24"><path d="M4 5c7 1 13 7 15 14" fill="none" stroke="#bbb" stroke-width="2.2"/><path d="M4 5c7 1 13 7 15 14" fill="none" stroke="#f4f4f4" stroke-width="0.8"/><circle cx="4" cy="5" r="3" fill="url(#gball)"/><circle cx="4" cy="18.5" r="3" fill="url(#gball)"/><circle cx="18.5" cy="19" r="3" fill="url(#gball)"/></svg>
<svg style="left:810px;top:72px" width="24" height="24" viewBox="0 0 24 24"><circle cx="11" cy="12" r="10" fill="none" stroke="#c4c4c4" stroke-width="2.2"/><circle cx="11" cy="12" r="10" fill="none" stroke="#f8f8f8" stroke-width="0.8"/><circle cx="10" cy="10.5" r="3" fill="url(#gball)"/><circle cx="19.5" cy="10.5" r="3" fill="url(#gball)"/></svg>
<svg style="left:868px;top:72px" width="20" height="24" viewBox="0 0 20 24"><path d="M10 1L3 20c2 2 12 2 15 0z" fill="url(#gball)"/><path d="M5 14c2 3 8 3 10 0" fill="none" stroke="#fff" stroke-width="1.5"/><circle cx="4" cy="14" r="1.8" fill="#aaa"/><circle cx="16" cy="12" r="1.8" fill="#aaa"/></svg>
<svg style="left:932px;top:72px" width="25" height="24" viewBox="0 0 25 24"><path d="M4 18L8 9L13 17L20 5" fill="none" stroke="#bbb" stroke-width="2.2"/><path d="M4 18L8 9L13 17L20 5" fill="none" stroke="#f4f4f4" stroke-width="0.7"/><circle cx="3.5" cy="18" r="3" fill="url(#gball)"/><circle cx="9" cy="8.5" r="3" fill="url(#gball)"/><circle cx="13" cy="17" r="3" fill="url(#gball)"/><circle cx="20" cy="5" r="3" fill="url(#gball)"/></svg>
<svg style="left:969px;top:72px" width="24" height="24" viewBox="0 0 24 24"><rect x="3" y="4" width="17" height="15" fill="none" stroke="#c0c0c0" stroke-width="2.4"/><rect x="3" y="4" width="17" height="15" fill="none" stroke="#f6f6f6" stroke-width="0.8"/><circle cx="19.5" cy="4.5" r="3" fill="url(#gball)"/><circle cx="3.5" cy="19" r="3" fill="url(#gball)"/></svg>
<svg style="left:1004px;top:72px" width="24" height="24" viewBox="0 0 24 24"><path d="M11 2l9 5v10l-9 5l-9-5V7z" fill="none" stroke="#c0c0c0" stroke-width="2.2"/><path d="M11 2l9 5v10l-9 5l-9-5V7z" fill="none" stroke="#f6f6f6" stroke-width="0.7"/><circle cx="11" cy="12" r="3" fill="url(#gball)"/><circle cx="19" cy="6" r="3" fill="url(#gball)"/></svg>
<svg style="left:1060px;top:72px" width="25" height="24" viewBox="0 0 25 24"><rect x="2" y="6" width="20" height="12" rx="6" fill="none" stroke="#c0c0c0" stroke-width="2.4"/><rect x="2" y="6" width="20" height="12" rx="6" fill="none" stroke="#f6f6f6" stroke-width="0.8"/><circle cx="8" cy="12" r="3" fill="url(#gball)"/><circle cx="16" cy="5.5" r="3" fill="url(#gball)"/></svg>
<svg style="left:1107px;top:72px" width="24" height="24" viewBox="0 0 24 24"><path d="M4 2v17h18" fill="none" stroke="#c4c4c4" stroke-width="1.5" stroke-dasharray="1.5 1"/><path d="M4 7c0 8 4 12 13 12" fill="none" stroke="#bbb" stroke-width="1.4"/><circle cx="4.5" cy="6.5" r="2.8" fill="url(#gball)"/><circle cx="17.5" cy="18.5" r="2.8" fill="url(#gball)"/></svg>
<svg style="left:1145px;top:72px" width="22" height="24" viewBox="0 0 22 24"><path d="M2 1L18 22M18 1L5 22" stroke="#c8c8c8" stroke-width="2.2"/><path d="M2 1L18 22M18 1L5 22" stroke="#f8f8f8" stroke-width="0.7"/><circle cx="10" cy="11" r="2.8" fill="url(#gball)"/></svg>
<svg style="left:1180px;top:72px" width="24" height="24" viewBox="0 0 24 24"><path d="M2 16l4-3h12v5l-3 3H2z" fill="url(#gsilver)" stroke="#aaa" stroke-width="0.6"/><path d="M6 13l12 0l3 -1v6" fill="none" stroke="#bbb" stroke-width="0.6"/><path d="M14 12l2-4" stroke="#888" stroke-width="0.8"/><path d="M7 4h14" stroke="#888" stroke-width="1" stroke-dasharray="1.5 1"/><circle cx="7" cy="4" r="1.5" fill="#888"/><circle cx="21" cy="4.5" r="1.5" fill="#888"/></svg>
<svg style="left:1218px;top:72px" width="20" height="24" viewBox="0 0 20 24"><rect x="1" y="2" width="4.5" height="20" fill="#fff" stroke="#aaa" stroke-width="0.8"/><path d="M7 12l2-2v4z M10 12l-1.5-1.5v3z" fill="#999"/><path d="M17 2v20" stroke="#8a8a8a" stroke-width="3" stroke-dasharray="3 1"/></svg>
<svg style="left:1270px;top:78px" width="13" height="12" viewBox="0 0 13 12"><circle cx="6.5" cy="6" r="5.2" fill="#9e9e9e" stroke="#8c8c8c" stroke-width="0.6"/></svg>
<svg style="left:1302px;top:72px" width="24" height="24" viewBox="0 0 24 24"><path d="M6 22c-3-8 0-18 17-16" fill="none" stroke="#9a9a9a" stroke-width="3.6"/><circle cx="7.5" cy="7" r="3.6" fill="#9e9e9e" stroke="#888" stroke-width="0.6"/></svg>
<svg style="left:1345px;top:72px" width="8" height="24" viewBox="0 0 8 24"><rect x="1" y="1" width="5.5" height="22" rx="0.6" fill="#9a9a9a" stroke="#8a8a8a" stroke-width="0.5"/></svg>
<svg style="left:1373px;top:80px" width="24" height="8" viewBox="0 0 24 8"><rect x="1" y="1.5" width="22" height="5" rx="0.6" fill="#9a9a9a" stroke="#8a8a8a" stroke-width="0.5"/></svg>
<svg style="left:1408px;top:72px" width="25" height="24" viewBox="0 0 25 24"><path d="M2 13L14 1M9 23L22 8" stroke="#9a9a9a" stroke-width="4.4"/></svg>
<svg style="left:1445px;top:72px" width="24" height="24" viewBox="0 0 24 24"><path d="M1 18h21v5H1z M8.5 1h5.5v17H8.5z" fill="#9a9a9a" stroke="#8a8a8a" stroke-width="0.5"/></svg>
<svg style="left:1480px;top:72px" width="25" height="24" viewBox="0 0 25 24"><path d="M8 2L23 17" stroke="#9a9a9a" stroke-width="3.6"/><path d="M1 8c6-1 12 4 14 15" fill="none" stroke="#9a9a9a" stroke-width="3.4"/></svg>
<svg style="left:1519px;top:73px" width="20" height="22" viewBox="0 0 20 22"><rect x="1.5" y="2" width="16" height="5.5" rx="1" fill="#9a9a9a" stroke="#8a8a8a" stroke-width="0.5"/><rect x="1.5" y="12.5" width="16" height="5.5" rx="1" fill="#9a9a9a" stroke="#8a8a8a" stroke-width="0.5"/></svg>
<svg style="left:1553px;top:72px" width="25" height="24" viewBox="0 0 25 24"><path d="M2 5l7.5 7l-7.5 7" fill="none" stroke="#9a9a9a" stroke-width="3.4"/><path d="M23 5l-7.5 7l7.5 7" fill="none" stroke="#9a9a9a" stroke-width="3.4"/></svg>
<svg style="left:1602px;top:73px" width="21" height="22" viewBox="0 0 21 22"><path d="M5 11V7c0-6 10-6 10 0v4" fill="none" stroke="#9a9a9a" stroke-width="3.2"/><rect x="1" y="10" width="18" height="11" rx="1.5" fill="#9a9a9a"/></svg>
<svg style="left:1636px;top:77px" width="25" height="15" viewBox="0 0 25 15"><path d="M2 1v13M22 1v13" stroke="#9a9a9a" stroke-width="3.4"/><path d="M2 7.5h20" stroke="#9a9a9a" stroke-width="3.6"/></svg>
<svg style="left:1676px;top:72px" width="16" height="24" viewBox="0 0 16 24"><path d="M1 2h14M1 22h14" stroke="#9a9a9a" stroke-width="3.4"/><path d="M8 2v20" stroke="#9a9a9a" stroke-width="3.6"/></svg>
<svg style="left:1708px;top:72px" width="24" height="24" viewBox="0 0 24 24"><path d="M5 19L19 5" stroke="#9a9a9a" stroke-width="3"/><path d="M1 23l3-10l7 7z M23 1l-3 10l-7-7z" fill="#9a9a9a"/></svg>
<svg style="left:1743px;top:72px" width="26" height="24" viewBox="0 0 26 24"><circle cx="12.5" cy="12" r="10" fill="none" stroke="#9a9a9a" stroke-width="3.4"/><path d="M12.5 12l5-5" stroke="#9a9a9a" stroke-width="3"/></svg>
<svg style="left:1780px;top:72px" width="23" height="24" viewBox="0 0 23 24"><path d="M22 2L2 12L22 22" fill="none" stroke="#9a9a9a" stroke-width="3.8"/><path d="M11 7c3 3 3 7 0 10" fill="none" stroke="#9a9a9a" stroke-width="2.6"/></svg>
<svg style="left:1814px;top:72px" width="27" height="24" viewBox="0 0 27 24"><path d="M1 12h25" stroke="#9a9a9a" stroke-width="3.4"/><path d="M2 1l8 11l3 11M6 1l6 11l5 11" fill="none" stroke="#b4b4b4" stroke-width="0.9"/></svg>
<svg style="left:1865px;top:72px" width="24" height="24" viewBox="0 0 24 24"><path d="M7 4c-6 4-6 12 0 16" fill="none" stroke="#aaa" stroke-width="1" stroke-dasharray="1.5 1"/><path d="M20 3v18" stroke="#999" stroke-width="1.3"/><path d="M10 8h8M10 16h8" stroke="#8a8a8a" stroke-width="1.6"/><path d="M9 8l3-2.5v5z M9 16l3-2.5v5z" fill="#8a8a8a"/><circle cx="7" cy="3.5" r="2.3" fill="url(#gball)"/><circle cx="7" cy="20.5" r="2.3" fill="url(#gball)"/><circle cx="20" cy="3" r="2.3" fill="url(#gball)"/><circle cx="20" cy="21" r="2.3" fill="url(#gball)"/></svg>
<svg style="left:1908px;top:81px" width="10" height="8" viewBox="0 0 10 8"><path d="M1 1l3 3l-3 3M5 1l3 3l-3 3" fill="none" stroke="#111" stroke-width="1.4"/></svg>
<svg style="left:6px;top:30px" width="52" height="52" viewBox="0 0 52 52"><defs><linearGradient id="tg0" x1="0" y1="0" x2="0" y2="1"><stop offset="0" stop-color="#fff" stop-opacity="0.28"/><stop offset="0.5" stop-color="#fff" stop-opacity="0.08"/><stop offset="1" stop-color="#000" stop-opacity="0.05"/></linearGradient></defs><rect x="0.5" y="0.5" width="51" height="51" rx="5" fill="#4d63a3"/><rect x="0.5" y="0.5" width="51" height="51" rx="5" fill="url(#tg0)" stroke="rgba(255,255,255,0.25)" stroke-width="1"/><path d="M8 40C4 25 14 8 32 6" fill="none" stroke="#9aa8d8" stroke-width="1.2" opacity="0.6"/><path d="M14 46C30 50 46 36 44 18" fill="none" stroke="#9aa8d8" stroke-width="1.2" opacity="0.6"/><circle cx="26" cy="26" r="14" fill="#fff"/><circle cx="26" cy="26" r="7.6" fill="none" stroke="#1c2c5a" stroke-width="2.6"/><circle cx="31" cy="17.3" r="2.5" fill="#1c2c5a" stroke="#fff" stroke-width="1.1"/><circle cx="16" cy="26" r="2.5" fill="#1c2c5a" stroke="#fff" stroke-width="1.1"/><circle cx="31" cy="34.7" r="2.5" fill="#1c2c5a" stroke="#fff" stroke-width="1.1"/></svg>
<svg style="left:6px;top:89px" width="52" height="52" viewBox="0 0 52 52"><defs><linearGradient id="tg1" x1="0" y1="0" x2="0" y2="1"><stop offset="0" stop-color="#fff" stop-opacity="0.28"/><stop offset="0.5" stop-color="#fff" stop-opacity="0.08"/><stop offset="1" stop-color="#000" stop-opacity="0.05"/></linearGradient></defs><rect x="0.5" y="0.5" width="51" height="51" rx="5" fill="#8b4158"/><rect x="0.5" y="0.5" width="51" height="51" rx="5" fill="url(#tg1)" stroke="rgba(255,255,255,0.25)" stroke-width="1"/><defs><linearGradient id="cab" x1="0" y1="0" x2="0" y2="1"><stop offset="0" stop-color="#e4e4e4"/><stop offset="1" stop-color="#a9a9a9"/></linearGradient></defs><path d="M5 6h42v41H5z" fill="url(#cab)" stroke="#777" stroke-width="0.8"/><rect x="8" y="12" width="36" height="8" fill="#333"/><rect x="10" y="14" width="32" height="6" fill="#f19a4a"/><rect x="11" y="16" width="30" height="1.2" fill="#fff"/><path d="M7 21h38v24H7z" fill="#cfcfcf" stroke="#8a8a8a" stroke-width="0.8"/><rect x="20" y="30" width="12" height="6" rx="1.5" fill="#f4f4f4" stroke="#777" stroke-width="1"/></svg>
<svg style="left:6px;top:148px" width="52" height="52" viewBox="0 0 52 52"><defs><linearGradient id="tg2" x1="0" y1="0" x2="0" y2="1"><stop offset="0" stop-color="#fff" stop-opacity="0.28"/><stop offset="0.5" stop-color="#fff" stop-opacity="0.08"/><stop offset="1" stop-color="#000" stop-opacity="0.05"/></linearGradient></defs><rect x="0.5" y="0.5" width="51" height="51" rx="5" fill="#ae7a55"/><rect x="0.5" y="0.5" width="51" height="51" rx="5" fill="url(#tg2)" stroke="rgba(255,255,255,0.25)" stroke-width="1"/><defs><radialGradient id="ffg" cx="0.45" cy="0.35" r="0.7"><stop offset="0" stop-color="#70b8f0"/><stop offset="0.6" stop-color="#2a60b8"/><stop offset="1" stop-color="#18307a"/></radialGradient><linearGradient id="ffo" x1="0" y1="0" x2="1" y2="1"><stop offset="0" stop-color="#ff8a20"/><stop offset="1" stop-color="#d8401a"/></linearGradient></defs><circle cx="28" cy="24" r="18" fill="url(#ffg)"/><path d="M8 18C6 30 12 44 26 46C38 47 47 38 47 26C47 20 45 15 42 12C44 18 43 24 40 28C38 33 32 36 26 35C20 34 16 30 17 25C17 22 19 20 22 19C19 17 16 14 15 9C12 11 10 14 8 18Z" fill="url(#ffo)"/><path d="M39 7C46 11 50 20 47 30C45 23 42 17 37 12Z" fill="#ffc830"/><path d="M10 13L13 5L17 12Z" fill="#ff7a20"/><path d="M22 19c3 0 5 1 6 3" fill="none" stroke="#f06020" stroke-width="2"/></svg>
<svg style="left:6px;top:207px" width="52" height="52" viewBox="0 0 52 52"><defs><linearGradient id="tg3" x1="0" y1="0" x2="0" y2="1"><stop offset="0" stop-color="#fff" stop-opacity="0.28"/><stop offset="0.5" stop-color="#fff" stop-opacity="0.08"/><stop offset="1" stop-color="#000" stop-opacity="0.05"/></linearGradient></defs><rect x="0.5" y="0.5" width="51" height="51" rx="5" fill="#3f5f92"/><rect x="0.5" y="0.5" width="51" height="51" rx="5" fill="url(#tg3)" stroke="rgba(255,255,255,0.25)" stroke-width="1"/><path d="M5 13h42l-1 35H6z" fill="#ef7a3c"/><path d="M5 13h42v4H5z" fill="#f59a60"/><path d="M18 13v-5c0-5 16-5 16 0v5" fill="none" stroke="#f08a50" stroke-width="3"/><path d="M19 40l7-16l7 16M21 34h10" fill="none" stroke="#fff" stroke-width="3.2"/><path d="M17 36h18" stroke="#fff" stroke-width="2"/></svg>
<svg style="left:6px;top:266px" width="52" height="52" viewBox="0 0 52 52"><defs><linearGradient id="tg4" x1="0" y1="0" x2="0" y2="1"><stop offset="0" stop-color="#fff" stop-opacity="0.28"/><stop offset="0.5" stop-color="#fff" stop-opacity="0.08"/><stop offset="1" stop-color="#000" stop-opacity="0.05"/></linearGradient></defs><rect x="0.5" y="0.5" width="51" height="51" rx="5" fill="#4d6890"/><rect x="0.5" y="0.5" width="51" height="51" rx="5" fill="url(#tg4)" stroke="rgba(255,255,255,0.25)" stroke-width="1"/><g transform="translate(26 26)"><circle r="17" fill="#ececec"/><rect x="-4.5" y="-22" width="9" height="8" rx="1.2" fill="#ececec" transform="rotate(0)"/><rect x="-4.5" y="-22" width="9" height="8" rx="1.2" fill="#ececec" transform="rotate(45)"/><rect x="-4.5" y="-22" width="9" height="8" rx="1.2" fill="#ececec" transform="rotate(90)"/><rect x="-4.5" y="-22" width="9" height="8" rx="1.2" fill="#ececec" transform="rotate(135)"/><rect x="-4.5" y="-22" width="9" height="8" rx="1.2" fill="#ececec" transform="rotate(180)"/><rect x="-4.5" y="-22" width="9" height="8" rx="1.2" fill="#ececec" transform="rotate(225)"/><rect x="-4.5" y="-22" width="9" height="8" rx="1.2" fill="#ececec" transform="rotate(270)"/><rect x="-4.5" y="-22" width="9" height="8" rx="1.2" fill="#ececec" transform="rotate(315)"/><circle r="12" fill="#d8d8d8"/><circle r="6.5" fill="#4d6890"/></g><path d="M13 44L36 21" stroke="#a8201a" stroke-width="7" stroke-linecap="round"/><path d="M13 44L36 21" stroke="#e0403a" stroke-width="4.5" stroke-linecap="round"/><circle cx="13.5" cy="43.5" r="1.3" fill="#fff"/><path d="M33 22l4-4c-1-5 3-10 8-9l-4 5l1 3l3 1l5-4c1 5-4 9-9 8l-4 4z" fill="#f0f0f0" stroke="#9a9a9a" stroke-width="0.8"/></svg>
<svg style="left:6px;top:325px" width="52" height="52" viewBox="0 0 52 52"><defs><linearGradient id="tg5" x1="0" y1="0" x2="0" y2="1"><stop offset="0" stop-color="#fff" stop-opacity="0.28"/><stop offset="0.5" stop-color="#fff" stop-opacity="0.08"/><stop offset="1" stop-color="#000" stop-opacity="0.05"/></linearGradient></defs><rect x="0.5" y="0.5" width="51" height="51" rx="5" fill="#4f6e96"/><rect x="0.5" y="0.5" width="51" height="51" rx="5" fill="url(#tg5)" stroke="rgba(255,255,255,0.25)" stroke-width="1"/><defs><radialGradient id="pur" cx="0.65" cy="0.65" r="0.7"><stop offset="0" stop-color="#d890d8"/><stop offset="0.35" stop-color="#b048b8"/><stop offset="1" stop-color="#7a1888"/></radialGradient></defs><rect x="3.5" y="8" width="45" height="38" rx="3" fill="url(#pur)" stroke="#5a1a68" stroke-width="0.8"/><rect x="3.5" y="8" width="45" height="6" rx="2" fill="#f2eedc" stroke="#8a8060" stroke-width="0.5"/><path d="M7 20h5l1.5 1.5v5H7zM7 30h5l1.5 1.5v5H7z" fill="#fff"/></svg>
<svg style="left:6px;top:384px" width="52" height="52" viewBox="0 0 52 52"><defs><linearGradient id="tg6" x1="0" y1="0" x2="0" y2="1"><stop offset="0" stop-color="#fff" stop-opacity="0.28"/><stop offset="0.5" stop-color="#fff" stop-opacity="0.08"/><stop offset="1" stop-color="#000" stop-opacity="0.05"/></linearGradient></defs><rect x="0.5" y="0.5" width="51" height="51" rx="5" fill="#b5485a"/><rect x="0.5" y="0.5" width="51" height="51" rx="5" fill="url(#tg6)" stroke="rgba(255,255,255,0.25)" stroke-width="1"/><path d="M3 2h24v10H13v8h11v9H13v15H3z" fill="#ff4a18" stroke="#4a1000" stroke-width="2"/><g transform="translate(33 30)"><circle r="12" fill="#2a50c8" stroke="#0a1a60" stroke-width="1.5"/><rect x="-3.5" y="-17" width="7" height="7" fill="#2a50c8" stroke="#0a1a60" stroke-width="1.2" transform="rotate(0)"/><rect x="-3.5" y="-17" width="7" height="7" fill="#2a50c8" stroke="#0a1a60" stroke-width="1.2" transform="rotate(45)"/><rect x="-3.5" y="-17" width="7" height="7" fill="#2a50c8" stroke="#0a1a60" stroke-width="1.2" transform="rotate(90)"/><rect x="-3.5" y="-17" width="7" height="7" fill="#2a50c8" stroke="#0a1a60" stroke-width="1.2" transform="rotate(135)"/><rect x="-3.5" y="-17" width="7" height="7" fill="#2a50c8" stroke="#0a1a60" stroke-width="1.2" transform="rotate(180)"/><rect x="-3.5" y="-17" width="7" height="7" fill="#2a50c8" stroke="#0a1a60" stroke-width="1.2" transform="rotate(225)"/><rect x="-3.5" y="-17" width="7" height="7" fill="#2a50c8" stroke="#0a1a60" stroke-width="1.2" transform="rotate(270)"/><rect x="-3.5" y="-17" width="7" height="7" fill="#2a50c8" stroke="#0a1a60" stroke-width="1.2" transform="rotate(315)"/><circle r="12" fill="#2a50c8"/><circle r="5" fill="#b5485a" stroke="#0a1a60" stroke-width="1.5"/></g></svg>
<svg style="left:6px;top:443px" width="52" height="52" viewBox="0 0 52 52"><defs><linearGradient id="tg7" x1="0" y1="0" x2="0" y2="1"><stop offset="0" stop-color="#fff" stop-opacity="0.28"/><stop offset="0.5" stop-color="#fff" stop-opacity="0.08"/><stop offset="1" stop-color="#000" stop-opacity="0.05"/></linearGradient></defs><rect x="0.5" y="0.5" width="51" height="51" rx="5" fill="#52709a"/><rect x="0.5" y="0.5" width="51" height="51" rx="5" fill="url(#tg7)" stroke="rgba(255,255,255,0.25)" stroke-width="1"/><path d="M44 14c-4-7-11-10-18-10c-13 0-22 10-22 22s9 22 22 22c7 0 14-3 18-10l-9-6c-2 3-5 5-9 5c-7 0-11-5-11-11s4-11 11-11c4 0 7 2 9 5z" fill="#1a7a9a"/><path d="M47 14c-4-7-11-10-18-10c-13 0-21 10-21 22s8 22 21 22c7 0 14-3 18-10l-9-6c-2 3-5 5-9 5c-7 0-11-5-11-11s4-11 11-11c4 0 7 2 9 5z" fill="#27c0ea"/></svg>
<svg style="left:6px;top:502px" width="52" height="52" viewBox="0 0 52 52"><defs><linearGradient id="tg8" x1="0" y1="0" x2="0" y2="1"><stop offset="0" stop-color="#fff" stop-opacity="0.28"/><stop offset="0.5" stop-color="#fff" stop-opacity="0.08"/><stop offset="1" stop-color="#000" stop-opacity="0.05"/></linearGradient></defs><rect x="0.5" y="0.5" width="51" height="51" rx="5" fill="#587a9e"/><rect x="0.5" y="0.5" width="51" height="51" rx="5" fill="url(#tg8)" stroke="rgba(255,255,255,0.25)" stroke-width="1"/><defs><linearGradient id="chg" x1="0" y1="0" x2="1" y2="1"><stop offset="0" stop-color="#a8cdf0"/><stop offset="1" stop-color="#4a88c8"/></linearGradient></defs><circle cx="26" cy="26" r="21" fill="url(#chg)"/><path d="M26 26L44 15A21 21 0 0 1 29 47Z" fill="#c8e0f8" opacity="0.7"/><path d="M26 26L8 36A21 21 0 0 1 14 9Z" fill="#5a90d0" opacity="0.6"/><circle cx="26" cy="26" r="9.5" fill="#fff"/><circle cx="26" cy="26" r="7.8" fill="#4a7cc8"/></svg>
<svg style="left:6px;top:561px" width="52" height="52" viewBox="0 0 52 52"><defs><linearGradient id="tg9" x1="0" y1="0" x2="0" y2="1"><stop offset="0" stop-color="#fff" stop-opacity="0.28"/><stop offset="0.5" stop-color="#fff" stop-opacity="0.08"/><stop offset="1" stop-color="#000" stop-opacity="0.05"/></linearGradient></defs><rect x="0.5" y="0.5" width="51" height="51" rx="5" fill="#6a7898"/><rect x="0.5" y="0.5" width="51" height="51" rx="5" fill="url(#tg9)" stroke="rgba(255,255,255,0.25)" stroke-width="1"/><rect x="5" y="9" width="42" height="35" rx="3" fill="#b8b8b8"/><rect x="6" y="13" width="40" height="27" fill="#a030a8"/><rect x="6" y="9" width="40" height="4" fill="#d8d8d8"/><rect x="6" y="40" width="40" height="4" fill="#d8d8d8"/><circle cx="19" cy="26" r="9" fill="#e8e8e8"/><circle cx="19" cy="26" r="5" fill="#6a30a0"/><circle cx="19" cy="26" r="2.5" fill="#ccc"/><path d="M32 17h10M32 21h10M32 25h10M32 29h10M32 33h10" stroke="#d080d0" stroke-width="2" stroke-dasharray="2 2"/></svg>
<svg style="left:6px;top:620px" width="52" height="52" viewBox="0 0 52 52"><defs><linearGradient id="tg10" x1="0" y1="0" x2="0" y2="1"><stop offset="0" stop-color="#fff" stop-opacity="0.28"/><stop offset="0.5" stop-color="#fff" stop-opacity="0.08"/><stop offset="1" stop-color="#000" stop-opacity="0.05"/></linearGradient></defs><rect x="0.5" y="0.5" width="51" height="51" rx="5" fill="#9a9ea8"/><rect x="0.5" y="0.5" width="51" height="51" rx="5" fill="url(#tg10)" stroke="rgba(255,255,255,0.25)" stroke-width="1"/><rect x="4" y="9" width="44" height="36" rx="2" fill="#ddd" stroke="#888" stroke-width="1"/><rect x="7" y="12" width="38" height="30" fill="#2a2a2a"/><path d="M11 17l5 3l-5 3" fill="none" stroke="#fff" stroke-width="1.8"/><path d="M17 26h6" stroke="#fff" stroke-width="1.8"/></svg>
<svg style="left:6px;top:679px" width="52" height="52" viewBox="0 0 52 52"><defs><linearGradient id="tg11" x1="0" y1="0" x2="0" y2="1"><stop offset="0" stop-color="#fff" stop-opacity="0.28"/><stop offset="0.5" stop-color="#fff" stop-opacity="0.08"/><stop offset="1" stop-color="#000" stop-opacity="0.05"/></linearGradient></defs><rect x="0.5" y="0.5" width="51" height="51" rx="5" fill="#8a8e96"/><rect x="0.5" y="0.5" width="51" height="51" rx="5" fill="url(#tg11)" stroke="rgba(255,255,255,0.25)" stroke-width="1"/><path d="M7 12l4-5h30l4 5v34H7z" fill="#333"/><rect x="10" y="14" width="32" height="28" rx="2" fill="#222" stroke="#555" stroke-width="1"/><circle cx="26" cy="24" r="4" fill="#eee"/><circle cx="26" cy="24" r="2" fill="#333"/><path d="M26 30v4M26 34l-3 3M26 34l3 2" stroke="#eee" stroke-width="1.2"/></svg>
<svg style="left:6px;top:738px" width="52" height="52" viewBox="0 0 52 52"><defs><linearGradient id="tg12" x1="0" y1="0" x2="0" y2="1"><stop offset="0" stop-color="#fff" stop-opacity="0.28"/><stop offset="0.5" stop-color="#fff" stop-opacity="0.08"/><stop offset="1" stop-color="#000" stop-opacity="0.05"/></linearGradient></defs><rect x="0.5" y="0.5" width="51" height="51" rx="5" fill="#a8aab2"/><rect x="0.5" y="0.5" width="51" height="51" rx="5" fill="url(#tg12)" stroke="rgba(255,255,255,0.25)" stroke-width="1"/><path d="M9 5h34v40H9z" fill="#f4f4f4" stroke="#bbb" stroke-width="0.8"/><path d="M13 12h26M13 16h26M13 20h26M13 24h26M13 28h20M13 32h18M13 36h22" stroke="#c8c8c8" stroke-width="0.8"/><path d="M16 40l4-8l22-18l4 4l-22 18z" fill="#333"/><path d="M42 14l4 4l3-3l-4-4z" fill="#f090b0"/><path d="M16 40l4-8l4 4z" fill="#f0d8a0"/></svg>
<svg style="left:6px;top:797px" width="52" height="52" viewBox="0 0 52 52"><defs><linearGradient id="tg13" x1="0" y1="0" x2="0" y2="1"><stop offset="0" stop-color="#fff" stop-opacity="0.28"/><stop offset="0.5" stop-color="#fff" stop-opacity="0.08"/><stop offset="1" stop-color="#000" stop-opacity="0.05"/></linearGradient></defs><rect x="0.5" y="0.5" width="51" height="51" rx="5" fill="#b08848"/><rect x="0.5" y="0.5" width="51" height="51" rx="5" fill="url(#tg13)" stroke="rgba(255,255,255,0.25)" stroke-width="1"/><defs><linearGradient id="wil" x1="0" y1="0" x2="0" y2="1"><stop offset="0" stop-color="#8a8478"/><stop offset="1" stop-color="#4a463e"/></linearGradient></defs><ellipse cx="26" cy="38" rx="16" ry="4" fill="#7a5a30" opacity="0.4"/><path d="M11 9.5C14 14 18 16 24 16C30 16 37 12 39 6.5C41 14 40 22 36 28C32 34 26 36 20 34C14 32 10 28 8 24C8 18 9 13 11 9.5Z" fill="url(#wil)"/><ellipse cx="7.5" cy="24" rx="6" ry="5.3" fill="#111" transform="rotate(-25 7.5 24)"/><ellipse cx="6" cy="22.5" rx="2" ry="1.3" fill="#888"/><circle cx="15.5" cy="20" r="3.6" fill="#f0f0f0"/><circle cx="23.5" cy="20.5" r="3.6" fill="#f0f0f0"/><circle cx="16.5" cy="20.5" r="1.8" fill="#000"/><circle cx="24.5" cy="21" r="1.8" fill="#000"/><path d="M27 26.5L41 35" stroke="#e07a18" stroke-width="2.4"/><path d="M40 33.5C44 33 48 38 49 44C45 42 40 39 39 36Z" fill="#111"/></svg>
<svg style="left:6px;top:856px" width="52" height="52" viewBox="0 0 52 52"><defs><linearGradient id="tg14" x1="0" y1="0" x2="0" y2="1"><stop offset="0" stop-color="#fff" stop-opacity="0.28"/><stop offset="0.5" stop-color="#fff" stop-opacity="0.08"/><stop offset="1" stop-color="#000" stop-opacity="0.05"/></linearGradient></defs><rect x="0.5" y="0.5" width="51" height="51" rx="5" fill="#4f6088"/><rect x="0.5" y="0.5" width="51" height="51" rx="5" fill="url(#tg14)" stroke="rgba(255,255,255,0.25)" stroke-width="1"/><rect x="1" y="1" width="25" height="25" fill="#5a4a6a" opacity="0.8"/><path d="M26 1v50M1 26h50" stroke="#9aa4c0" stroke-width="1"/><rect x="7" y="9" width="9" height="7" fill="none" stroke="#fff" stroke-width="1.4"/><rect x="11" y="13" width="9" height="7" fill="#5a4a6a" stroke="#fff" stroke-width="1.4"/></svg>
<svg style="left:6px;top:1142px" width="52" height="52" viewBox="0 0 52 52"><defs><linearGradient id="tg15" x1="0" y1="0" x2="0" y2="1"><stop offset="0" stop-color="#fff" stop-opacity="0.28"/><stop offset="0.5" stop-color="#fff" stop-opacity="0.08"/><stop offset="1" stop-color="#000" stop-opacity="0.05"/></linearGradient></defs><rect x="0.5" y="0.5" width="51" height="51" rx="5" fill="#6a7898"/><rect x="0.5" y="0.5" width="51" height="51" rx="5" fill="url(#tg15)" stroke="rgba(255,255,255,0.25)" stroke-width="1"/><path d="M10 10h32l-3 36c0 2-3 3-13 3s-13-1-13-3z" fill="#c8ccd4" opacity="0.7"/><ellipse cx="26" cy="10" rx="16" ry="3" fill="none" stroke="#eee" stroke-width="2"/><path d="M15 22l5 4l4-3l6 3l4-2l3 4l-2 8l2 6l-5 3l-6-2l-5 2l-5-3l1-7l-3-6z" fill="#fff" opacity="0.9"/></svg>
<svg style="left:0;top:109px" width="4" height="6" viewBox="0 0 4 6"><path d="M0 0L4 3L0 6Z" fill="#eee"/></svg>
<svg style="left:0;top:114px" width="4" height="6" viewBox="0 0 4 6"><path d="M0 0L4 3L0 6Z" fill="#eee"/></svg>
<svg style="left:0;top:0" width="65" height="1200" viewBox="0 0 65 1200"><path d="M0 169L4 173L0 177Z" fill="none" stroke="#e8e8e8" stroke-width="0.8"/></svg>
<svg style="left:0;top:0" width="65" height="1200" viewBox="0 0 65 1200"><path d="M0 406L4 410L0 414Z" fill="#f0f0f0" stroke="#e8e8e8" stroke-width="0.8"/></svg>
<svg style="left:0;top:0" width="65" height="1200" viewBox="0 0 65 1200"><path d="M64 406L60 410L64 414Z" fill="#f0f0f0" stroke="#e8e8e8" stroke-width="0.8"/></svg>
<svg style="left:0;top:0" width="65" height="1200" viewBox="0 0 65 1200"><path d="M0 642L4 646L0 650Z" fill="#f0f0f0" stroke="#e8e8e8" stroke-width="0.8"/></svg>
<svg style="left:0;top:0" width="65" height="1200" viewBox="0 0 65 1200"><path d="M0 701L4 705L0 709Z" fill="none" stroke="#e8e8e8" stroke-width="0.8"/></svg>
<svg style="left:0;top:0" width="65" height="1200" viewBox="0 0 65 1200"><path d="M0 760L4 764L0 768Z" fill="none" stroke="#e8e8e8" stroke-width="0.8"/></svg>
<svg style="left:0;top:0" width="65" height="1200" viewBox="0 0 65 1200"><path d="M0 819L4 823L0 827Z" fill="#f0f0f0" stroke="#e8e8e8" stroke-width="0.8"/></svg>
<div class="a" style="left:1591px;top:1px;width:40px;height:22px;background:#2e2d2a"></div>
<svg style="left:1591px;top:1px" width="40" height="22" viewBox="0 0 40 22"><path d="M1 21.5h6l2-1l2 1h6l2-1.5l2 1.5h3l2-2l2 2h12" fill="none" stroke="#3aa0e8" stroke-width="1"/></svg>
<svg style="left:1642px;top:4px" width="20" height="17" viewBox="0 0 20 17"><path d="M5 1L1 6h2.5v7h3V6H9z" fill="#dfdbd2"/><path d="M14 16l4-5h-2.5V4h-3v7H10z" fill="#dfdbd2"/></svg>
<div class="a" style="left:1674px;top:2px;width:20px;height:20px;border-radius:2px;background:#dfdbd2"></div>
<div class="a" style="left:1676px;top:5px;font-size:14px;line-height:14px;color:#3c3b37;letter-spacing:-0.3px">Es</div>
<svg style="left:1706px;top:5px" width="26" height="14" viewBox="0 0 26 14"><rect x="1" y="1.5" width="21" height="11" rx="2" fill="none" stroke="#dfdbd2" stroke-width="1.6"/><rect x="3" y="3.5" width="17" height="7" fill="#8a8780"/><rect x="22.5" y="4.5" width="2.5" height="5" fill="#dfdbd2"/><path d="M9 4l4 3h-1.5l3 3l-5-3h1.5z" fill="#dfdbd2"/></svg>
<svg style="left:1742px;top:4px" width="22" height="17" viewBox="0 0 22 17"><path d="M1 6h3l5-4v13l-5-4H1z" fill="#dfdbd2"/><path d="M12 5c1.5 2 1.5 5 0 7" fill="none" stroke="#dfdbd2" stroke-width="1.5"/><path d="M15 3c2.5 3 2.5 8 0 11" fill="none" stroke="#dfdbd2" stroke-width="1.4"/><path d="M18 1c3.5 4 3.5 11 0 15" fill="none" stroke="#9a978f" stroke-width="1.3"/></svg>
<div class="a" style="left:1775px;top:4px;font-size:14.5px;line-height:17px;color:#dfdbd2;white-space:nowrap">sáb feb 28 08:34</div>
<svg style="left:1894px;top:2px" width="20" height="20" viewBox="0 0 20 20"><g transform="translate(10 11)"><circle r="6" fill="none" stroke="#dfdbd2" stroke-width="3"/><rect x="-1.6" y="-9" width="3.2" height="4" fill="#dfdbd2" transform="rotate(0)"/><rect x="-1.6" y="-9" width="3.2" height="4" fill="#dfdbd2" transform="rotate(45)"/><rect x="-1.6" y="-9" width="3.2" height="4" fill="#dfdbd2" transform="rotate(90)"/><rect x="-1.6" y="-9" width="3.2" height="4" fill="#dfdbd2" transform="rotate(135)"/><rect x="-1.6" y="-9" width="3.2" height="4" fill="#dfdbd2" transform="rotate(180)"/><rect x="-1.6" y="-9" width="3.2" height="4" fill="#dfdbd2" transform="rotate(225)"/><rect x="-1.6" y="-9" width="3.2" height="4" fill="#dfdbd2" transform="rotate(270)"/><rect x="-1.6" y="-9" width="3.2" height="4" fill="#dfdbd2" transform="rotate(315)"/><circle r="3" fill="#4a4944"/></g><path d="M10 1v9" stroke="#4a4944" stroke-width="3"/><path d="M10 1.5v8" stroke="#dfdbd2" stroke-width="1.8"/></svg>
<svg style="left:80px;top:172px" width="24" height="21" viewBox="0 0 24 21"><defs><linearGradient id="ycube" x1="0" y1="0" x2="1" y2="1"><stop offset="0" stop-color="#ffff30"/><stop offset="1" stop-color="#e0a000"/></linearGradient></defs><ellipse cx="13" cy="18" rx="10" ry="2" fill="#5a3a2a" opacity="0.6"/><path d="M1.5 5L6 1.5H17L13 5z" fill="#f8e040" stroke="#6a5000" stroke-width="0.7"/><path d="M1.5 5H13V18.5H1.5z" fill="url(#ycube)" stroke="#6a5000" stroke-width="0.7"/><path d="M13 5L17 1.5V15L13 18.5z" fill="#d89000" stroke="#6a5000" stroke-width="0.7"/></svg>
<svg style="left:80px;top:303px" width="25" height="24" viewBox="0 0 25 24"><path d="M1 12L6 9L13 5.5L19 2L24 5V22H1z" fill="#0a3ad8" stroke="#040c50" stroke-width="0.9"/><path d="M3.5 6l3.5-2.2l3.5 2.2v4l-3.5 2l-3.5-2z" fill="#f0cc10" stroke="#4a3600" stroke-width="0.6"/><path d="M12 4l5-3l6 3v7l-6 3l-5-3z" fill="#f8dc20" stroke="#4a3600" stroke-width="0.7"/><path d="M8.5 12l3.5-2.2l3.5 2.2v4l-3.5 2l-3.5-2z" fill="#f0cc10" stroke="#4a3600" stroke-width="0.6"/><path d="M14.5 15l3.5-2.2l3.5 2.2v4l-3.5 2l-3.5-2z" fill="#f0cc10" stroke="#4a3600" stroke-width="0.6"/><path d="M3 14l3-2l3 2v4l-3 2l-3-2z" fill="#0c5ae8" stroke="#030a40" stroke-width="0.7"/></svg>
<svg style="left:357px;top:175px" width="15" height="15" viewBox="0 0 15 15"><circle cx="7.5" cy="7.5" r="7" fill="#fff"/><path d="M4.5 7.5l3-3l3 3M4.5 10.5l3-3l3 3" fill="none" stroke="#e87040" stroke-width="1.3"/></svg>
<svg style="left:357px;top:308px" width="15" height="15" viewBox="0 0 15 15"><circle cx="7.5" cy="7.5" r="7" fill="#fff"/><path d="M4.5 7.5l3-3l3 3M4.5 10.5l3-3l3 3" fill="none" stroke="#e87040" stroke-width="1.3"/></svg>
<svg style="left:83px;top:198px" width="15" height="16" viewBox="0 0 15 16"><path d="M1 0.5h11l1.5 1.5v12.5H1z" fill="#fff" stroke="#333" stroke-width="0.9"/><path d="M13.5 2v13H2.5" fill="none" stroke="#555" stroke-width="1"/><circle cx="8.5" cy="5.5" r="3.3" fill="none" stroke="#f02020" stroke-width="0.9"/><rect x="2.5" y="6" width="6" height="5.5" fill="none" stroke="#f02020" stroke-width="0.9"/></svg>
<svg style="left:82px;top:222px" width="16" height="16" viewBox="0 0 16 16"><path d="M1 4L8 1.5L15 4V12L8 15L1 12z" fill="#0a38d0" stroke="#040c50" stroke-width="0.8"/><path d="M1 4L8 6.5V15L1 12z" fill="#17a0ff" stroke="#040c50" stroke-width="0.7"/><path d="M8 6.5L15 4V12L8 15z" fill="#0838c8" stroke="#040c50" stroke-width="0.7"/><path d="M1 4.5c1-2 4-3 7-2.5l2.5 1.5l-2.5 3l-0.5 3.5c-3 0-6-1-6.5-2.5z" fill="#e01828" stroke="#400" stroke-width="0.5"/></svg>
<svg style="left:82px;top:245px" width="16" height="16" viewBox="0 0 16 16"><path d="M1 4L8 1.5L15 4V12L8 15L1 12z" fill="#0a38d0" stroke="#040c50" stroke-width="0.8"/><path d="M1 4L8 6.5V15L1 12z" fill="#17a0ff" stroke="#040c50" stroke-width="0.7"/><path d="M8 6.5L15 4V12L8 15z" fill="#0838c8" stroke="#040c50" stroke-width="0.7"/><path d="M1 5.5L5.5 2.5L10 4L7.5 7L8 10L1 8z" fill="#e81818" stroke="#400" stroke-width="0.5"/></svg>
<svg style="left:82px;top:268px" width="16" height="16" viewBox="0 0 16 16"><path d="M3.5 3L9 1L15 3.5V12L8.5 15L1 13z" fill="#0a38d0" stroke="#040c50" stroke-width="0.8"/><path d="M3.5 3L9 5L8.5 15L1 13z" fill="#c02840" stroke="#300010" stroke-width="0.7"/><path d="M9 5L15 3.5V12L8.5 15z" fill="#1040e0" stroke="#040c50" stroke-width="0.7"/></svg>
<svg style="left:82px;top:332px" width="17" height="16" viewBox="0 0 17 16"><path d="M0.5 8L4 6L9 3.5L12.5 1.5L16 3.5V15H0.5z" fill="#0a3ad8" stroke="#040c50" stroke-width="0.7"/><path d="M4 4l2-1.5l2 1.5v5l-2 1.5l-2-1.5z" fill="#0c5ae8" stroke="#030a40" stroke-width="0.5"/><ellipse cx="12" cy="7" rx="3.3" ry="1.5" fill="#fff060" stroke="#503000" stroke-width="0.5"/><path d="M8.7 7v4c0 1 1.6 1.6 3.3 1.6s3.3-0.6 3.3-1.6v-4" fill="#f0c800" stroke="#503000" stroke-width="0.5"/></svg>
<svg style="left:82px;top:355px" width="17" height="16" viewBox="0 0 17 16"><path d="M0.5 8L4 6L9 3.5L12.5 1.5L16 3.5V15H0.5z" fill="#0a3ad8" stroke="#040c50" stroke-width="0.7"/><path d="M1.5 7l2-1.3l2 1.3v2.6l-2 1.3l-2-1.3z" fill="#0c5ae8" stroke="#030a40" stroke-width="0.5"/><path d="M6.2 6.2l2.3-1.5l2.3 1.5v2.6l-2.3 1.4l-2.3-1.4z" fill="#f0cc10" stroke="#4a3600" stroke-width="0.5"/><path d="M11.2 5.7l2.3-1.5l2.3 1.5v2.6l-2.3 1.4l-2.3-1.4z" fill="#f0cc10" stroke="#4a3600" stroke-width="0.5"/></svg>
<svg style="left:82px;top:378px" width="17" height="16" viewBox="0 0 17 16"><path d="M0.5 8L4 6L9 3.5L12.5 1.5L16 3.5V15H0.5z" fill="#0a3ad8" stroke="#040c50" stroke-width="0.7"/><path d="M2.7 4.2l2.3-1.5l2.3 1.5v2.6l-2.3 1.4l-2.3-1.4z" fill="#f0cc10" stroke="#4a3600" stroke-width="0.5"/><path d="M6.7 2.2l2.3-1.5l2.3 1.5v2.6l-2.3 1.4l-2.3-1.4z" fill="#f0cc10" stroke="#4a3600" stroke-width="0.5"/><path d="M10.7 4.2l2.3-1.5l2.3 1.5v2.6l-2.3 1.4l-2.3-1.4z" fill="#f0cc10" stroke="#4a3600" stroke-width="0.5"/><path d="M11.2 8.7l2.3-1.5l2.3 1.5v2.6l-2.3 1.4l-2.3-1.4z" fill="#f0cc10" stroke="#4a3600" stroke-width="0.5"/><path d="M6.7 11.2l2.3-1.5l2.3 1.5v2.6l-2.3 1.4l-2.3-1.4z" fill="#f0cc10" stroke="#4a3600" stroke-width="0.5"/><path d="M2 8.5l2-1.3l2 1.3v2.6l-2 1.3l-2-1.3z" fill="#0c5ae8" stroke="#030a40" stroke-width="0.5"/></svg>
<svg style="left:82px;top:401px" width="17" height="16" viewBox="0 0 17 16"><path d="M0.5 8L4 6L9 3.5L12.5 1.5L16 3.5V15H0.5z" fill="#0a3ad8" stroke="#040c50" stroke-width="0.7"/><path d="M2.2 3.7l2.3-1.5l2.3 1.5v2.6l-2.3 1.4l-2.3-1.4z" fill="#f0cc10" stroke="#4a3600" stroke-width="0.5"/><path d="M8 2.5l3.5-2l4 2v4.5l-4 2l-3.5-2z" fill="#f8dc20" stroke="#4a3600" stroke-width="0.6"/><path d="M5.7 7.7l2.3-1.5l2.3 1.5v2.6l-2.3 1.4l-2.3-1.4z" fill="#f0cc10" stroke="#4a3600" stroke-width="0.5"/><path d="M9.7 9.7l2.3-1.5l2.3 1.5v2.6l-2.3 1.4l-2.3-1.4z" fill="#f0cc10" stroke="#4a3600" stroke-width="0.5"/><path d="M2 9l2-1.3l2 1.3v2.6l-2 1.3l-2-1.3z" fill="#0c5ae8" stroke="#030a40" stroke-width="0.5"/></svg>
<svg style="left:400px;top:1145px" width="16" height="16" viewBox="0 0 16 16"><path d="M1 1h8v3H5v2.5h3.5V9H5v5H1z" fill="#ff3a10" stroke="#7a1000" stroke-width="0.6"/><g transform="translate(10 9.5)"><circle r="4" fill="#1a40c0"/><rect x="-1.3" y="-6" width="2.6" height="2.6" fill="#1a40c0" transform="rotate(0)"/><rect x="-1.3" y="-6" width="2.6" height="2.6" fill="#1a40c0" transform="rotate(45)"/><rect x="-1.3" y="-6" width="2.6" height="2.6" fill="#1a40c0" transform="rotate(90)"/><rect x="-1.3" y="-6" width="2.6" height="2.6" fill="#1a40c0" transform="rotate(135)"/><rect x="-1.3" y="-6" width="2.6" height="2.6" fill="#1a40c0" transform="rotate(180)"/><rect x="-1.3" y="-6" width="2.6" height="2.6" fill="#1a40c0" transform="rotate(225)"/><rect x="-1.3" y="-6" width="2.6" height="2.6" fill="#1a40c0" transform="rotate(270)"/><rect x="-1.3" y="-6" width="2.6" height="2.6" fill="#1a40c0" transform="rotate(315)"/><circle r="1.7" fill="#fff"/></g></svg>
<svg style="left:493px;top:1147px" width="14" height="14" viewBox="0 0 14 14"><path d="M2.5 2.5l9 9M11.5 2.5l-9 9" stroke="#555" stroke-width="3.2"/></svg>
<svg style="left:388px;top:633px" width="5" height="9" viewBox="0 0 5 9"><path d="M0 1.5h4M0 4.5h4M0 7.5h4" stroke="#b8b5b0" stroke-width="0.9"/></svg>
</body></html>
